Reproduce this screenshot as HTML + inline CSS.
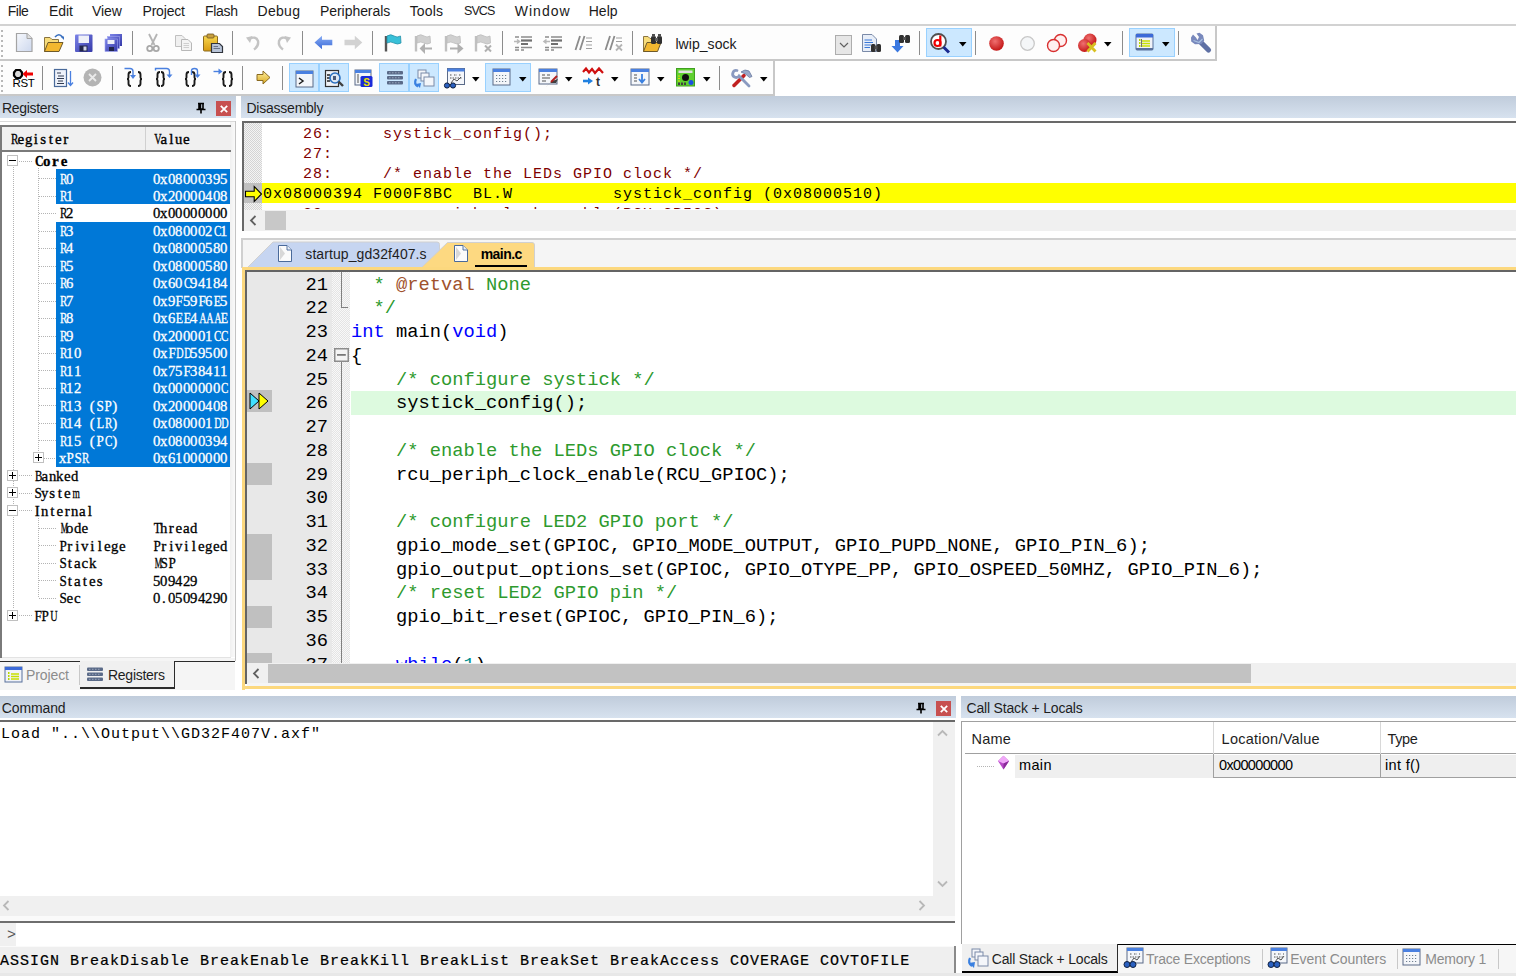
<!DOCTYPE html><html><head><meta charset="utf-8"><style>
*{box-sizing:border-box}
html,body{margin:0;padding:0;width:1516px;height:976px;overflow:hidden;background:#fff;position:relative}
div,span{position:absolute}
.t{white-space:pre;font-family:"Liberation Sans",sans-serif;font-size:13px;line-height:13px;color:#000}
.m{white-space:pre;font-family:"Liberation Mono",monospace}
.title{height:22px;background:linear-gradient(#c1ccda,#d6e1ee)}
svg{position:absolute;overflow:visible}
</style></head><body>
<span class="t" style="left:7.80px;top:4.15px;font-size:14px;line-height:14px;letter-spacing:-0.508px;color:#1a1a1a;">File</span>
<span class="t" style="left:49.00px;top:4.15px;font-size:14px;line-height:14px;letter-spacing:-0.108px;color:#1a1a1a;">Edit</span>
<span class="t" style="left:92.00px;top:4.15px;font-size:14px;line-height:14px;letter-spacing:-0.083px;color:#1a1a1a;">View</span>
<span class="t" style="left:142.50px;top:4.15px;font-size:14px;line-height:14px;letter-spacing:-0.188px;color:#1a1a1a;">Project</span>
<span class="t" style="left:205.00px;top:4.15px;font-size:14px;line-height:14px;letter-spacing:-0.312px;color:#1a1a1a;">Flash</span>
<span class="t" style="left:257.50px;top:4.15px;font-size:14px;line-height:14px;letter-spacing:0.312px;color:#1a1a1a;">Debug</span>
<span class="t" style="left:320.00px;top:4.15px;font-size:14px;line-height:14px;letter-spacing:-0.057px;color:#1a1a1a;">Peripherals</span>
<span class="t" style="left:409.70px;top:4.15px;font-size:14px;line-height:14px;letter-spacing:0.138px;color:#1a1a1a;">Tools</span>
<span class="t" style="left:464.00px;top:5.42px;font-size:12.5px;line-height:12.5px;letter-spacing:-0.933px;color:#1a1a1a;">SVCS</span>
<span class="t" style="left:514.80px;top:4.15px;font-size:14px;line-height:14px;letter-spacing:1.000px;color:#1a1a1a;">Window</span>
<span class="t" style="left:588.70px;top:4.15px;font-size:14px;line-height:14px;letter-spacing:0.050px;color:#1a1a1a;">Help</span>
<div style="left:0px;top:24px;width:1516px;height:2px;background:#d2d2d2"></div>
<div style="left:0px;top:26px;width:1216px;height:34px;background:#fdfdfd"></div>
<div style="left:1215px;top:26px;width:2px;height:35px;background:#c8c8c8"></div>
<div style="left:0px;top:59px;width:1217px;height:2px;background:#c8c8c8"></div>
<div style="left:0px;top:61px;width:773px;height:34px;background:#fdfdfd"></div>
<div style="left:773px;top:61px;width:2px;height:35px;background:#c8c8c8"></div>
<div style="left:0px;top:94px;width:775px;height:2px;background:#c8c8c8"></div>
<div style="left:1px;top:30px;width:2px;height:2px;background:#b8b8b8"></div>
<div style="left:1px;top:35px;width:2px;height:2px;background:#b8b8b8"></div>
<div style="left:1px;top:40px;width:2px;height:2px;background:#b8b8b8"></div>
<div style="left:1px;top:45px;width:2px;height:2px;background:#b8b8b8"></div>
<div style="left:1px;top:50px;width:2px;height:2px;background:#b8b8b8"></div>
<div style="left:1px;top:55px;width:2px;height:2px;background:#b8b8b8"></div>
<div style="left:1px;top:65px;width:2px;height:2px;background:#b8b8b8"></div>
<div style="left:1px;top:70px;width:2px;height:2px;background:#b8b8b8"></div>
<div style="left:1px;top:75px;width:2px;height:2px;background:#b8b8b8"></div>
<div style="left:1px;top:80px;width:2px;height:2px;background:#b8b8b8"></div>
<div style="left:1px;top:85px;width:2px;height:2px;background:#b8b8b8"></div>
<div style="left:1px;top:90px;width:2px;height:2px;background:#b8b8b8"></div>
<div style="left:131.6px;top:31px;width:1px;height:24px;background:#8c8c8c"></div>
<div style="left:231.6px;top:31px;width:1px;height:24px;background:#8c8c8c"></div>
<div style="left:301.8px;top:31px;width:1px;height:24px;background:#8c8c8c"></div>
<div style="left:371.7px;top:31px;width:1px;height:24px;background:#8c8c8c"></div>
<div style="left:501.8px;top:31px;width:1px;height:24px;background:#8c8c8c"></div>
<div style="left:632px;top:31px;width:1px;height:24px;background:#8c8c8c"></div>
<div style="left:919px;top:31px;width:1px;height:24px;background:#8c8c8c"></div>
<div style="left:975px;top:31px;width:1px;height:24px;background:#8c8c8c"></div>
<div style="left:1122px;top:31px;width:1px;height:24px;background:#8c8c8c"></div>
<div style="left:1178px;top:31px;width:1px;height:24px;background:#8c8c8c"></div>
<div style="left:41.6px;top:66px;width:1px;height:24px;background:#8c8c8c"></div>
<div style="left:111.6px;top:66px;width:1px;height:24px;background:#8c8c8c"></div>
<div style="left:241.8px;top:66px;width:1px;height:24px;background:#8c8c8c"></div>
<div style="left:281.7px;top:66px;width:1px;height:24px;background:#8c8c8c"></div>
<div style="left:719px;top:66px;width:1px;height:24px;background:#8c8c8c"></div>
<div style="left:926px;top:28px;width:46px;height:29px;background:#cce8ff;border:1px solid #99d1ff"></div>
<div style="left:1129px;top:28px;width:46px;height:29px;background:#cce8ff;border:1px solid #99d1ff"></div>
<div style="left:288.5px;top:63px;width:30.0px;height:28.5px;background:#cce8ff;border:1px solid #99d1ff"></div>
<div style="left:318.5px;top:63px;width:30.0px;height:28.5px;background:#cce8ff;border:1px solid #99d1ff"></div>
<div style="left:378.5px;top:63px;width:30.0px;height:28.5px;background:#cce8ff;border:1px solid #99d1ff"></div>
<div style="left:408.5px;top:63px;width:30.0px;height:28.5px;background:#cce8ff;border:1px solid #99d1ff"></div>
<div style="left:484.7px;top:63px;width:45.900000000000034px;height:28.5px;background:#cce8ff;border:1px solid #99d1ff"></div>
<svg style="left:15px;top:32px" width="19" height="21" viewBox="0 0 19 21"><defs><linearGradient id="gnew" x1="0" y1="0" x2="1" y2="1"><stop offset="0" stop-color="#f6f8fc"/><stop offset="1" stop-color="#cdd8ee"/></linearGradient></defs><path d="M1.5 1.5H12L17 6.5V19.5H1.5Z" fill="url(#gnew)" stroke="#a4a4a4" stroke-width="1.2"/><path d="M12 1.5V6.5H17" fill="#e0e0e0" stroke="#a4a4a4" stroke-width="1"/></svg>
<svg style="left:43px;top:33px" width="22" height="20" viewBox="0 0 22 20"><path d="M1.5 4.5H7L9 6.5H15.5V18.5H1.5Z" fill="#f7dc7a" stroke="#8a7440" stroke-width="1"/><path d="M1.5 18.5L5 9.5H20L16 18.5Z" fill="#f2b830" stroke="#6e5a2a" stroke-width="1"/><path d="M12 4 Q16 -0.5 19.5 4" fill="none" stroke="#3a70c0" stroke-width="1.6"/><path d="M17.5 3.5H21V7Z" fill="#3a70c0"/></svg>
<svg style="left:74px;top:33px" width="20" height="20" viewBox="0 0 20 20"><defs><linearGradient id="gsv" x1="0" y1="0" x2="1" y2="1"><stop offset="0" stop-color="#7c84e8"/><stop offset="1" stop-color="#3438a8"/></linearGradient></defs><rect x="1" y="1.5" width="17.5" height="17.5" rx="1" fill="url(#gsv)"/><rect x="4.5" y="2.5" width="10.5" height="7.5" fill="#eef0f8"/><rect x="5.5" y="12.5" width="8" height="6" fill="#22264a"/><rect x="9.5" y="13.5" width="3" height="4" fill="#d0d4e8"/></svg>
<svg style="left:104px;top:33px" width="20" height="20" viewBox="0 0 20 20"><defs><linearGradient id="gsa" x1="0" y1="0" x2="1" y2="1"><stop offset="0" stop-color="#7c84e8"/><stop offset="1" stop-color="#3438a8"/></linearGradient></defs><rect x="6" y="1" width="12" height="12" fill="url(#gsa)"/><rect x="3.5" y="3.5" width="12" height="12" fill="url(#gsa)" stroke="#9ea4ee" stroke-width=".6"/><rect x="1" y="6" width="12.5" height="12.5" fill="url(#gsa)" stroke="#9ea4ee" stroke-width=".6"/><rect x="3.5" y="7" width="7" height="4" fill="#eef0f8"/><rect x="5" y="14" width="5" height="4" fill="#22264a"/></svg>
<svg style="left:146px;top:33px" width="14" height="20" viewBox="0 0 14 20"><path d="M3 1L8.5 12M11 1L5.5 12" stroke="#b4b4b4" stroke-width="1.8" fill="none"/><circle cx="3.8" cy="15.5" r="2.6" fill="none" stroke="#a8a8a8" stroke-width="1.8"/><circle cx="10.2" cy="15.5" r="2.6" fill="none" stroke="#a8a8a8" stroke-width="1.8"/></svg>
<svg style="left:174px;top:34px" width="20" height="18" viewBox="0 0 20 18"><path d="M1.5 1.5H8L11 4.5V12.5H1.5Z" fill="#f0f0f0" stroke="#c0c0c0"/><path d="M7.5 5.5H14L17.5 9V16.5H7.5Z" fill="#f4f4f4" stroke="#b8b8b8"/><path d="M9.5 9.5H15M9.5 11.5H15M9.5 13.5H15" stroke="#cfcfcf"/></svg>
<svg style="left:202px;top:33px" width="22" height="20" viewBox="0 0 22 20"><defs><linearGradient id="gps" x1="0" y1="0" x2="0" y2="1"><stop offset="0" stop-color="#f8d850"/><stop offset="1" stop-color="#d89a10"/></linearGradient></defs><rect x="1.5" y="3" width="14" height="15" rx="1" fill="url(#gps)" stroke="#8a6a20"/><rect x="5" y="1" width="7" height="4" rx="1" fill="#c8a040" stroke="#6e5420" stroke-width=".8"/><path d="M9.5 10.5H17.5L20.5 13.5V19.5H9.5Z" fill="#b8c4d8" stroke="#30343c" stroke-width="1.2"/><path d="M11.5 13.5H16M11.5 15.5H18" stroke="#6a7488"/></svg>
<svg style="left:245px;top:34px" width="17" height="17" viewBox="0 0 17 17"><path d="M4 5 Q11 1.5 13 7 Q14 12 9 15.5" fill="none" stroke="#c4c4c4" stroke-width="2.4"/><path d="M1 3.5L7.5 2L5 9Z" fill="#c4c4c4"/></svg>
<svg style="left:275px;top:34px" width="17" height="17" viewBox="0 0 17 17"><path d="M13 5 Q6 1.5 4 7 Q3 12 8 15.5" fill="none" stroke="#c4c4c4" stroke-width="2.4"/><path d="M16 3.5L9.5 2L12 9Z" fill="#c4c4c4"/></svg>
<svg style="left:314px;top:35px" width="19" height="15" viewBox="0 0 19 15"><defs><linearGradient id="gbk" x1="0" y1="0" x2="0" y2="1"><stop offset="0" stop-color="#8aaef4"/><stop offset="1" stop-color="#3a6ad8"/></linearGradient></defs><path d="M0.5 7.5L8 0.7V4.8H18.3V10.2H8V14.3Z" fill="url(#gbk)"/></svg>
<svg style="left:344px;top:35px" width="19" height="15" viewBox="0 0 19 15"><path d="M18.3 7.5L10.8 0.7V4.8H0.5V10.2H10.8V14.3Z" fill="#d2d2d2"/></svg>
<svg style="left:383px;top:33px" width="20" height="20" viewBox="0 0 20 20"><path d="M3 3V18.5" stroke="#555" stroke-width="2.4"/><path d="M4 3 Q8 0.5 11 3 Q14 5 17.5 3 L18 10 Q14.5 12 11 10 Q8 8 4 10Z" fill="#38c0d8" stroke="#2490a8" stroke-width=".8"/></svg>
<svg style="left:413px;top:33px" width="21" height="20" viewBox="0 0 21 20"><path d="M3 3V18.5" stroke="#c0c0c0" stroke-width="2.4"/><path d="M4 3 Q8 0.5 11 3 Q14 5 17 3 L17.5 10 Q14 12 11 10 Q8 8 4 10Z" fill="#d0d0d0" stroke="#bcbcbc" stroke-width=".8"/><path d="M8 15.5H19M8 15.5L11 12.5V18.5Z" stroke="#b0b0b0" stroke-width="2" fill="#b0b0b0"/></svg>
<svg style="left:443px;top:33px" width="21" height="20" viewBox="0 0 21 20"><path d="M3 3V18.5" stroke="#c0c0c0" stroke-width="2.4"/><path d="M4 3 Q8 0.5 11 3 Q14 5 17 3 L17.5 10 Q14 12 11 10 Q8 8 4 10Z" fill="#d0d0d0" stroke="#bcbcbc" stroke-width=".8"/><path d="M7 15.5H17M19 15.5L15.5 12.5V18.5Z" stroke="#b0b0b0" stroke-width="2" fill="#b0b0b0"/></svg>
<svg style="left:473px;top:33px" width="21" height="20" viewBox="0 0 21 20"><path d="M3 3V18.5" stroke="#c0c0c0" stroke-width="2.4"/><path d="M4 3 Q8 0.5 11 3 Q14 5 17 3 L17.5 10 Q14 12 11 10 Q8 8 4 10Z" fill="#d0d0d0" stroke="#bcbcbc" stroke-width=".8"/><path d="M12 12.5L18 18.5M18 12.5L12 18.5" stroke="#b0b0b0" stroke-width="2"/></svg>
<svg style="left:513px;top:33px" width="21" height="20" viewBox="0 0 21 20"><path d="M8 4H19M8 7.5H19M8 11H15M8 14.5H19M8 17H11" stroke="#8c8c8c" stroke-width="1.4"/><path d="M2 4H6M2 14.5H6M2 17H6" stroke="#8c8c8c" stroke-width="1.4"/><path d="M8 7.5H19M8 11H15" stroke="#707070" stroke-width="2"/><path d="M1 8.5H6M4 6.5L6.5 8.5L4 10.5" stroke="#b8b8b8" stroke-width="1.6" fill="none"/></svg>
<svg style="left:543px;top:33px" width="21" height="20" viewBox="0 0 21 20"><path d="M8 4H19M8 7.5H19M8 11H15M8 14.5H19M8 17H11" stroke="#8c8c8c" stroke-width="1.4"/><path d="M2 4H6M2 14.5H6M2 17H6" stroke="#8c8c8c" stroke-width="1.4"/><path d="M8 7.5H19M8 11H15" stroke="#707070" stroke-width="2"/><path d="M1.5 8.5H7M3.5 6.5L1 8.5L3.5 10.5" stroke="#b8b8b8" stroke-width="1.6" fill="none"/></svg>
<svg style="left:574px;top:35px" width="20" height="17" viewBox="0 0 20 17"><path d="M6 1L1.5 15M10.5 1L6 15" stroke="#8c8c8c" stroke-width="1.8"/><path d="M12 3H18M12 6.5H18M12 10H18M12 13.5H18" stroke="#a0a0a0" stroke-width="1.2"/></svg>
<svg style="left:604px;top:35px" width="20" height="17" viewBox="0 0 20 17"><path d="M6 1L1.5 15M10.5 1L6 15" stroke="#8c8c8c" stroke-width="1.8"/><path d="M12 3H18M12 6.5H18" stroke="#a0a0a0" stroke-width="1.2"/><path d="M12 9.5L18 15.5M18 9.5L12 15.5" stroke="#b4b4b4" stroke-width="1.8"/></svg>
<svg style="left:642px;top:33px" width="24" height="20" viewBox="0 0 24 20"><path d="M1.5 3.5H6L8 5.5H14V18.5H1.5Z" fill="#f7dc7a" stroke="#8a7440"/><path d="M1.5 18.5L5 9.5H19L15.5 18.5Z" fill="#f2b830" stroke="#6e5a2a"/><rect x="9" y="3" width="5" height="8" rx="1.5" fill="#303030"/><rect x="15" y="3" width="5" height="8" rx="1.5" fill="#303030"/><rect x="13" y="5" width="3" height="3" fill="#606060"/><rect x="10" y="1" width="3" height="3" fill="#505050"/><rect x="16" y="1" width="3" height="3" fill="#505050"/></svg>
<svg style="left:861px;top:33px" width="22" height="20" viewBox="0 0 22 20"><path d="M1.5 1.5H11L15.5 6V18.5H1.5Z" fill="#e8eef8" stroke="#7a8aa8"/><path d="M3.5 7H11M3.5 9.5H12M3.5 12H10M3.5 14.5H9" stroke="#3a78d8" stroke-width="1.2"/><rect x="10" y="11" width="4.5" height="8" rx="1.5" fill="#303030"/><rect x="15.5" y="11" width="4.5" height="8" rx="1.5" fill="#303030"/><rect x="13.5" y="13" width="3" height="3" fill="#505050"/></svg>
<svg style="left:890px;top:33px" width="22" height="20" viewBox="0 0 22 20"><path d="M5 7V13H1.5L7.5 19.5L13.5 13H10V7Z" fill="#3a78e0"/><rect x="9" y="2" width="5" height="8" rx="1.5" fill="#303030"/><rect x="15" y="2" width="5" height="8" rx="1.5" fill="#303030"/><rect x="13" y="4" width="3" height="3" fill="#505050"/></svg>
<svg style="left:929px;top:32px" width="25" height="23" viewBox="0 0 25 23"><circle cx="9.5" cy="9.5" r="7.5" fill="#fff" stroke="#505050" stroke-width="1.8"/><path d="M14.5 15L20 20.5" stroke="#1a2a90" stroke-width="3"/><circle cx="8.5" cy="11" r="3" fill="none" stroke="#f00000" stroke-width="2.2"/><path d="M11.3 3.5V14.5" stroke="#f00000" stroke-width="2.2"/></svg>
<svg style="left:988px;top:35px" width="18" height="17" viewBox="0 0 18 17"><defs><radialGradient id="gbp" cx=".4" cy=".35" r=".7"><stop offset="0" stop-color="#f07070"/><stop offset="1" stop-color="#c01010"/></radialGradient></defs><circle cx="8.5" cy="8.5" r="7.3" fill="url(#gbp)"/></svg>
<svg style="left:1019px;top:35px" width="18" height="17" viewBox="0 0 18 17"><circle cx="8.5" cy="8.5" r="6.8" fill="#f4f6f8" stroke="#c8c8c8" stroke-width="1.3"/></svg>
<svg style="left:1046px;top:33px" width="23" height="20" viewBox="0 0 23 20"><circle cx="14.5" cy="7.5" r="6" fill="#fff0f0" stroke="#d83030" stroke-width="1.4"/><circle cx="7.5" cy="12.5" r="6" fill="#fff0f0" stroke="#d83030" stroke-width="1.4"/></svg>
<svg style="left:1077px;top:33px" width="23" height="20" viewBox="0 0 23 20"><circle cx="13" cy="7" r="6.5" fill="url(#gbp)"/><circle cx="7.5" cy="12.5" r="6.5" fill="url(#gbp)"/><path d="M10.5 10L18.5 18.5M18.5 10L10.5 18.5" stroke="#d8c020" stroke-width="2.8"/></svg>
<svg style="left:1135px;top:33px" width="20" height="19" viewBox="0 0 20 19"><rect x="1" y="1" width="17" height="16" rx="1" fill="#f0f2f8" stroke="#58709c"/><rect x="1" y="1" width="17" height="3.5" fill="#3c6ad8"/><rect x="1" y="15" width="17" height="2" fill="#58709c"/><path d="M4 7H5.5M4 10H5.5M4 13H5.5" stroke="#b8d800" stroke-width="2"/><path d="M7 8H15M7 10.5H15M7 13H15" stroke="#c8e000" stroke-width="1.5"/><path d="M6.5 6V14" stroke="#707070"/></svg>
<svg style="left:1190px;top:32px" width="22" height="22" viewBox="0 0 22 22"><path d="M11 10.5L18.5 18" stroke="#5e70a4" stroke-width="5.2" stroke-linecap="round"/><path d="M1 5.5L3 2.5L6 5.5L7.5 8L9 5L6.5 1.5L9.5 0.8L13 3.2L14.2 8.5L11.5 12L5 12.2L1.2 9.5Z" fill="#7888bc"/><path d="M3.5 8.5L9 10.5L12.5 7" fill="none" stroke="#a8c0e0" stroke-width="1.2"/></svg>
<svg style="left:12px;top:68px" width="23" height="20" viewBox="0 0 23 20"><path d="M4 2H8L10 4.5V7.5L8 10H4L2 7.5V4.5Z" fill="#d8d8d8" stroke="#000" stroke-width="2.2"/><path d="M10.5 6L15 2V4.5H21V7.5H15V10Z" fill="#f00000"/><text x="11.5" y="19.3" font-family="Liberation Sans" font-size="11.5" text-anchor="middle" fill="#000" letter-spacing="-.4">RST</text></svg>
<svg style="left:53px;top:68px" width="22" height="20" viewBox="0 0 22 20"><rect x="1.5" y="1.5" width="12" height="17" fill="#eef2fa" stroke="#4a6a9a" stroke-width="1.2"/><path d="M4 5H8M5 8H11M4 10.5H11M5 13H10M4 15.5H11" stroke="#303a50" stroke-width="1"/><path d="M17.5 3V17M15 14.5L17.5 17.5L20 14.5" stroke="#4a80e0" stroke-width="1.3" fill="none"/></svg>
<svg style="left:83px;top:68px" width="20" height="20" viewBox="0 0 20 20"><circle cx="9.5" cy="9.5" r="9" fill="#b4b4b4"/><path d="M6 6L13 13M13 6L6 13" stroke="#eaeaea" stroke-width="1.8"/></svg>
<svg style="left:123px;top:66px" width="22" height="22" viewBox="0 0 22 22"><path d="M8 6 Q5.5 6 5.5 8.5 V11.5 Q5.5 13 4 13 Q5.5 13 5.5 14.5 V17.5 Q5.5 20 8 20" fill="none" stroke="#1a1a1a" stroke-width="1.9"/><path d="M15 6 Q17.5 6 17.5 8.5 V11.5 Q17.5 13 19 13 Q17.5 13 17.5 14.5 V17.5 Q17.5 20 15 20" fill="none" stroke="#1a1a1a" stroke-width="1.9"/><path d="M1.5 2.5H7 Q10 2.5 10 5.5V10" fill="none" stroke="#4a80e0" stroke-width="1.4"/><path d="M7 9H13L10 13Z" fill="#4a80e0"/></svg>
<svg style="left:153px;top:66px" width="22" height="22" viewBox="0 0 22 22"><path d="M7 6 Q4.5 6 4.5 8.5 V11.5 Q4.5 13 3 13 Q4.5 13 4.5 14.5 V17.5 Q4.5 20 7 20" fill="none" stroke="#1a1a1a" stroke-width="1.9"/><path d="M8 6 Q10.5 6 10.5 8.5 V11.5 Q10.5 13 12 13 Q10.5 13 10.5 14.5 V17.5 Q10.5 20 8 20" fill="none" stroke="#1a1a1a" stroke-width="1.9"/><path d="M2.5 4.5V2.5H13.5 Q16.5 2.5 16.5 5.5V9" fill="none" stroke="#4a80e0" stroke-width="1.4"/><path d="M13.5 8.5H19.5L16.5 12Z" fill="#4a80e0"/></svg>
<svg style="left:183px;top:66px" width="22" height="22" viewBox="0 0 22 22"><path d="M6 6 Q3.5 6 3.5 8.5 V11.5 Q3.5 13 2 13 Q3.5 13 3.5 14.5 V17.5 Q3.5 20 6 20" fill="none" stroke="#1a1a1a" stroke-width="1.9"/><path d="M9 6 Q11.5 6 11.5 8.5 V11.5 Q11.5 13 13 13 Q11.5 13 11.5 14.5 V17.5 Q11.5 20 9 20" fill="none" stroke="#1a1a1a" stroke-width="1.9"/><path d="M8.5 9V5 Q8.5 2.5 11.5 2.5 Q14.5 2.5 14.5 5V9" fill="none" stroke="#4a80e0" stroke-width="1.4"/><path d="M11.5 8.5H17.5L14.5 12Z" fill="#4a80e0"/></svg>
<svg style="left:212px;top:66px" width="24" height="22" viewBox="0 0 24 22"><path d="M14 6 Q11.5 6 11.5 8.5 V11.5 Q11.5 13 10 13 Q11.5 13 11.5 14.5 V17.5 Q11.5 20 14 20" fill="none" stroke="#1a1a1a" stroke-width="1.9"/><path d="M17 6 Q19.5 6 19.5 8.5 V11.5 Q19.5 13 21 13 Q19.5 13 19.5 14.5 V17.5 Q19.5 20 17 20" fill="none" stroke="#1a1a1a" stroke-width="1.9"/><path d="M1.5 5.5H7.5" stroke="#4a80e0" stroke-width="1.4"/><path d="M6.5 2.5L10.5 5.5L6.5 8.5Z" fill="#4a80e0"/></svg>
<svg style="left:256px;top:70px" width="16" height="15" viewBox="0 0 16 15"><defs><linearGradient id="gya" x1="0" y1="0" x2="0" y2="1"><stop offset="0" stop-color="#fff0a0"/><stop offset="1" stop-color="#d8a820"/></linearGradient></defs><path d="M1 4.5H7V1L14 7.5L7 14V10.5H1Z" fill="url(#gya)" stroke="#8a6a20" stroke-width="1"/></svg>
<svg style="left:295px;top:70px" width="20" height="19" viewBox="0 0 20 19"><rect x="1" y="1" width="17" height="16" fill="#f4f6fa" stroke="#5a6a88" stroke-width="1"/><rect x="1" y="1" width="17" height="3" fill="#4a80e0"/><path d="M4 8L8 11L4 14" fill="none" stroke="#202020" stroke-width="1.5"/></svg>
<svg style="left:324px;top:69px" width="23" height="20" viewBox="0 0 23 20"><rect x="1.5" y="1.5" width="13" height="16" fill="#f0f2f6" stroke="#303030" stroke-width="1.2"/><path d="M3 6H6M3 9H6M3 12H6" stroke="#202020" stroke-width="1.4"/><circle cx="11" cy="9" r="5" fill="#dde8f4" stroke="#2a70c0" stroke-width="1.6"/><path d="M14.5 12.5L19 17" stroke="#404040" stroke-width="2.4"/><rect x="9" y="7" width="3" height="4" fill="#4a5a78"/></svg>
<svg style="left:354px;top:69px" width="19" height="18" viewBox="0 0 19 18"><rect x="1" y="1" width="16" height="15" fill="#f4f6fa" stroke="#5a6a88" stroke-width="1"/><rect x="1" y="1" width="16" height="3" fill="#4a80e0"/><path d="M4 5V14" stroke="#8a8a8a" stroke-width="1.5"/><rect x="6.5" y="7" width="12" height="11" rx="1.5" fill="#1a2ad8"/><text x="12.5" y="16.5" font-family="Liberation Sans" font-weight="bold" font-size="10" text-anchor="middle" fill="#f0e000">S</text></svg>
<svg style="left:386px;top:70px" width="18" height="16" viewBox="0 0 18 16"><rect x="1" y="1" width="16" height="3.6" rx="1" fill="#5a6a88"/><rect x="1" y="6" width="16" height="3.6" rx="1" fill="#5a6a88"/><rect x="1" y="11" width="16" height="3.6" rx="1" fill="#5a6a88"/><path d="M3 2.8H15M3 7.8H15M3 12.8H15" stroke="#a8b4c8" stroke-width=".8" stroke-dasharray="1.5 1.5"/></svg>
<svg style="left:413px;top:69px" width="23" height="20" viewBox="0 0 23 20"><rect x="5" y="1" width="8" height="8" fill="#f4f6fa" stroke="#7a8aa8"/><rect x="8" y="4" width="8" height="8" fill="#f4f6fa" stroke="#7a8aa8"/><rect x="11" y="8" width="10" height="9" fill="#f4f6fa" stroke="#7a8aa8"/><path d="M3 10 Q0.5 15 5 17.5" fill="none" stroke="#3a80e0" stroke-width="2.2"/><path d="M3 15L7 19L8 14Z" fill="#3a80e0"/></svg>
<svg style="left:443px;top:67px" width="24" height="22" viewBox="0 0 24 22"><rect x="4.5" y="1.5" width="17" height="16" fill="#f4f6fa" stroke="#5a6a88"/><rect x="4.5" y="1.5" width="17" height="3" fill="#4a80e0"/><path d="M7 8H9M11 8H14M16 8H18M7 11H19" stroke="#505050" stroke-dasharray="1.5 1"/><path d="M8 16L11 12L14 14L18 10" fill="none" stroke="#505050"/><circle cx="4" cy="18.5" r="2.6" fill="#2a60c0" stroke="#102040"/><circle cx="10" cy="18.5" r="2.6" fill="#2a60c0" stroke="#102040"/><path d="M6.5 18H7.5" stroke="#102040"/></svg>
<svg style="left:492px;top:68px" width="20" height="19" viewBox="0 0 20 19"><rect x="1" y="1" width="17" height="16" fill="#f4f6fa" stroke="#5a6a88" stroke-width="1"/><rect x="1" y="1" width="17" height="3" fill="#4a80e0"/><path d="M4 7.5H16M4 10.5H16M4 13.5H16" stroke="#708090" stroke-dasharray="1.2 1.8" stroke-width="1.2"/></svg>
<svg style="left:538px;top:68px" width="21" height="18" viewBox="0 0 21 18"><rect x="1" y="1" width="18" height="15" fill="#f4f6fa" stroke="#5a6a88" stroke-width="1"/><rect x="1" y="1" width="18" height="3" fill="#4a80e0"/><path d="M4 7H7M9 7H12M4 10H12M4 13H8" stroke="#505050" stroke-width="1.2"/><path d="M8 19L12 15L18 15L20 11L14 13Z" fill="#404040"/><path d="M13 14L19 8" stroke="#b02020" stroke-width="2"/></svg>
<svg style="left:582px;top:67px" width="23" height="21" viewBox="0 0 23 21"><path d="M1 5L4 1.5L7 5.5L10 2L13 6L17 1.5L21 6" fill="none" stroke="#d01010" stroke-width="2.2"/><path d="M1 14H7" stroke="#2080e0" stroke-width="2.6"/><path d="M6 10.5L11 14L6 17.5Z" fill="#2080e0"/><text x="16" y="19" font-family="Liberation Sans" font-weight="bold" font-size="12" text-anchor="middle" fill="#303030">t</text></svg>
<svg style="left:630px;top:68px" width="21" height="19" viewBox="0 0 21 19"><rect x="1" y="1" width="18" height="16" fill="#f4f6fa" stroke="#5a6a88" stroke-width="1"/><rect x="1" y="1" width="18" height="3" fill="#4a80e0"/><path d="M4 7H7M4 10H7M4 13H7" stroke="#505050" stroke-width="1.2"/><path d="M12 6V14M9 11L12 14.5L15 11" stroke="#3a80e0" stroke-width="1.8" fill="none"/></svg>
<svg style="left:676px;top:68px" width="20" height="19" viewBox="0 0 20 19"><rect x="0.5" y="0.5" width="18" height="17.5" fill="#60d030" stroke="#40a020"/><rect x="2.5" y="2.5" width="14" height="2.5" fill="#e0e0e0"/><circle cx="9.5" cy="9.5" r="3.5" fill="#101010"/><path d="M3 14.5V17M6 14.5V17M9 14.5V17" stroke="#404040" stroke-width="2"/><path d="M2 8H4M2 10.5H4M2 13H4" stroke="#e0e000" stroke-width="1.2"/><circle cx="15" cy="14.5" r="2.5" fill="#1a50e0"/></svg>
<svg style="left:731px;top:68px" width="23" height="20" viewBox="0 0 23 20"><path d="M3 17.5L13 7.5" stroke="#c02020" stroke-width="3.5" stroke-linecap="round"/><path d="M10 4Q14 0.5 18 3L21 8.5L18.5 9.5L14.5 6Z" fill="#98a8c8" stroke="#6a7aa0" stroke-width=".8"/><path d="M6 2.5A3.5 3.5 0 1 0 8 8L18 18" fill="none" stroke="#8a9ac0" stroke-width="2.8" stroke-linecap="round"/></svg>
<span class="t" style="left:675.40px;top:36.65px;font-size:14px;line-height:14px;letter-spacing:0.066px;color:#1a1a1a;">lwip_sock</span>
<div style="left:835px;top:35px;width:17px;height:20px;background:#e6e6e6;border:1px solid #adadad"></div>
<svg style="left:838px;top:40px" width="12" height="10"><path d="M2 3 L6 7 L10 3" fill="none" stroke="#606060" stroke-width="1.2"/></svg>
<svg style="left:959.3px;top:41.8px" width="9" height="6"><path d="M0 0 H7.5 L3.75 4.5Z" fill="#000"/></svg>
<svg style="left:1104.3px;top:41.8px" width="9" height="6"><path d="M0 0 H7.5 L3.75 4.5Z" fill="#000"/></svg>
<svg style="left:1162px;top:41.8px" width="9" height="6"><path d="M0 0 H7.5 L3.75 4.5Z" fill="#000"/></svg>
<svg style="left:472px;top:76.8px" width="9" height="6"><path d="M0 0 H7.5 L3.75 4.5Z" fill="#000"/></svg>
<svg style="left:518.5px;top:76.8px" width="9" height="6"><path d="M0 0 H7.5 L3.75 4.5Z" fill="#000"/></svg>
<svg style="left:564.8px;top:76.8px" width="9" height="6"><path d="M0 0 H7.5 L3.75 4.5Z" fill="#000"/></svg>
<svg style="left:611px;top:76.8px" width="9" height="6"><path d="M0 0 H7.5 L3.75 4.5Z" fill="#000"/></svg>
<svg style="left:657px;top:76.8px" width="9" height="6"><path d="M0 0 H7.5 L3.75 4.5Z" fill="#000"/></svg>
<svg style="left:703.3px;top:76.8px" width="9" height="6"><path d="M0 0 H7.5 L3.75 4.5Z" fill="#000"/></svg>
<svg style="left:759.8px;top:76.8px" width="9" height="6"><path d="M0 0 H7.5 L3.75 4.5Z" fill="#000"/></svg>
<div style="left:0px;top:96px;width:236px;height:22px;background:linear-gradient(#c0ccdb,#d7e2ef)"></div>
<svg style="left:196px;top:103px" width="10" height="11"><path d="M2 0.5H8M3 0.5V6H7V0.5M0.5 6.5H9.5M5 6.5V10.5" fill="none" stroke="#000" stroke-width="1.6"/><rect x="3" y="1" width="2.2" height="5" fill="#000"/></svg>
<div style="left:216px;top:101px;width:15px;height:15px;background:#c75050"></div>
<svg style="left:219.5px;top:104.5px" width="8" height="8"><path d="M0.8 0.8L7.2 7.2M7.2 0.8L0.8 7.2" stroke="#fff" stroke-width="1.8"/></svg>
<div style="left:241px;top:96px;width:1275px;height:22px;background:linear-gradient(#c0ccdb,#d7e2ef)"></div>
<div style="left:0px;top:696px;width:956px;height:22px;background:linear-gradient(#c0ccdb,#d7e2ef)"></div>
<svg style="left:916px;top:703px" width="10" height="11"><path d="M2 0.5H8M3 0.5V6H7V0.5M0.5 6.5H9.5M5 6.5V10.5" fill="none" stroke="#000" stroke-width="1.6"/><rect x="3" y="1" width="2.2" height="5" fill="#000"/></svg>
<div style="left:936px;top:701px;width:15px;height:15px;background:#c75050"></div>
<svg style="left:939.5px;top:704.5px" width="8" height="8"><path d="M0.8 0.8L7.2 7.2M7.2 0.8L0.8 7.2" stroke="#fff" stroke-width="1.8"/></svg>
<div style="left:961px;top:696px;width:555px;height:22px;background:linear-gradient(#c0ccdb,#d7e2ef)"></div>
<span class="t" style="left:2.00px;top:101.35px;font-size:14px;line-height:14px;letter-spacing:-0.303px;color:#1e1e1e;">Registers</span>
<span class="t" style="left:246.50px;top:101.35px;font-size:14px;line-height:14px;letter-spacing:-0.237px;color:#1e1e1e;">Disassembly</span>
<span class="t" style="left:1.70px;top:701.15px;font-size:14px;line-height:14px;letter-spacing:-0.104px;color:#1e1e1e;">Command</span>
<span class="t" style="left:966.50px;top:701.15px;font-size:14px;line-height:14px;letter-spacing:-0.178px;color:#1e1e1e;">Call Stack + Locals</span>
<div style="left:0px;top:121px;width:235px;height:1px;background:#d9d9d9"></div>
<div style="left:235px;top:121px;width:1px;height:540px;background:#c4c4c4"></div>
<div style="left:230px;top:122px;width:5px;height:535px;background:linear-gradient(90deg,#f0f0f0,#fafafa)"></div>
<div style="left:0px;top:125px;width:231px;height:2px;background:#7a7a7a"></div>
<div style="left:0px;top:125px;width:2px;height:533px;background:#7a7a7a"></div>
<div style="left:2px;top:127px;width:228px;height:23px;background:#f0f0f0"></div>
<div style="left:145px;top:127px;width:1px;height:23px;background:#d0d0d0"></div>
<div style="left:0px;top:150px;width:231px;height:2px;background:#7a7a7a"></div>
<div style="left:2px;top:152px;width:228px;height:505px;background:#fff"></div>
<div style="left:2px;top:657px;width:229px;height:1px;background:#e3e3e3"></div>
<span style="left:9.5px;top:132.2px;white-space:nowrap;font-family:'Liberation Serif',serif;font-size:15px;line-height:14px;color:#000;-webkit-text-stroke:0.3px #000;-webkit-text-stroke:0.35px #000;"><span style="position:static;display:inline-block;width:7.5px;text-align:center;transform:scaleX(0.735)">R</span><span style="position:static;display:inline-block;width:7.5px;text-align:center">e</span><span style="position:static;display:inline-block;width:7.5px;text-align:center;transform:scaleX(0.980)">g</span><span style="position:static;display:inline-block;width:7.5px;text-align:center">i</span><span style="position:static;display:inline-block;width:7.5px;text-align:center">s</span><span style="position:static;display:inline-block;width:7.5px;text-align:center">t</span><span style="position:static;display:inline-block;width:7.5px;text-align:center">e</span><span style="position:static;display:inline-block;width:7.5px;text-align:center">r</span></span>
<span style="left:152.5px;top:132.2px;white-space:nowrap;font-family:'Liberation Serif',serif;font-size:15px;line-height:14px;color:#000;-webkit-text-stroke:0.3px #000;-webkit-text-stroke:0.35px #000;"><span style="position:static;display:inline-block;width:7.5px;text-align:center;transform:scaleX(0.679)">V</span><span style="position:static;display:inline-block;width:7.5px;text-align:center">a</span><span style="position:static;display:inline-block;width:7.5px;text-align:center">l</span><span style="position:static;display:inline-block;width:7.5px;text-align:center;transform:scaleX(0.980)">u</span><span style="position:static;display:inline-block;width:7.5px;text-align:center">e</span></span>
<div style="left:56px;top:169.48px;width:174px;height:34.96px;background:#0078d7"></div>
<div style="left:56px;top:221.92000000000002px;width:174px;height:244.72px;background:#0078d7"></div>
<div style="left:13px;top:166.74px;width:1px;height:442.48px;background:repeating-linear-gradient(#b4b4b4 0 1px,transparent 1px 2px)"></div>
<div style="left:38px;top:168.48px;width:1px;height:283.4200000000001px;background:repeating-linear-gradient(#b4b4b4 0 1px,transparent 1px 2px)"></div>
<div style="left:38px;top:518.0799999999999px;width:1px;height:79.66000000000008px;background:repeating-linear-gradient(#b4b4b4 0 1px,transparent 1px 2px)"></div>
<div style="left:7px;top:155px;width:11px;height:11px;background:#fff;border:1px solid #c0c0c0"></div>
<div style="left:9px;top:160px;width:7px;height:1px;background:#000"></div>
<div style="left:19px;top:161px;width:13px;height:1px;background:repeating-linear-gradient(90deg,#b4b4b4 0 1px,transparent 1px 2px)"></div>
<span style="left:33.5px;top:154.04px;white-space:nowrap;font-family:'Liberation Serif',serif;font-size:15px;line-height:14px;color:#000;font-weight:bold;-webkit-text-stroke:0.3px #000;"><span style="position:static;display:inline-block;width:8.75px;text-align:center;transform:scaleX(0.792)">C</span><span style="position:static;display:inline-block;width:8.75px;text-align:center">o</span><span style="position:static;display:inline-block;width:8.75px;text-align:center">r</span><span style="position:static;display:inline-block;width:8.75px;text-align:center">e</span></span>
<div style="left:39px;top:178px;width:17px;height:1px;background:repeating-linear-gradient(90deg,#b4b4b4 0 1px,transparent 1px 2px)"></div>
<span style="left:58.5px;top:171.52px;white-space:nowrap;font-family:'Liberation Serif',serif;font-size:15px;line-height:14px;color:#fff;-webkit-text-stroke:0.3px #fff;"><span style="position:static;display:inline-block;width:7.5px;text-align:center;transform:scaleX(0.735)">R</span><span style="position:static;display:inline-block;width:7.5px;text-align:center;transform:scaleX(0.980)">0</span></span>
<span style="left:152.5px;top:171.52px;white-space:nowrap;font-family:'Liberation Serif',serif;font-size:15px;line-height:14px;color:#fff;-webkit-text-stroke:0.3px #fff;"><span style="position:static;display:inline-block;width:7.5px;text-align:center;transform:scaleX(0.980)">0</span><span style="position:static;display:inline-block;width:7.5px;text-align:center;transform:scaleX(0.980)">x</span><span style="position:static;display:inline-block;width:7.5px;text-align:center;transform:scaleX(0.980)">0</span><span style="position:static;display:inline-block;width:7.5px;text-align:center;transform:scaleX(0.980)">8</span><span style="position:static;display:inline-block;width:7.5px;text-align:center;transform:scaleX(0.980)">0</span><span style="position:static;display:inline-block;width:7.5px;text-align:center;transform:scaleX(0.980)">0</span><span style="position:static;display:inline-block;width:7.5px;text-align:center;transform:scaleX(0.980)">0</span><span style="position:static;display:inline-block;width:7.5px;text-align:center;transform:scaleX(0.980)">3</span><span style="position:static;display:inline-block;width:7.5px;text-align:center;transform:scaleX(0.980)">9</span><span style="position:static;display:inline-block;width:7.5px;text-align:center;transform:scaleX(0.980)">5</span></span>
<div style="left:39px;top:196px;width:17px;height:1px;background:repeating-linear-gradient(90deg,#b4b4b4 0 1px,transparent 1px 2px)"></div>
<span style="left:58.5px;top:189.0px;white-space:nowrap;font-family:'Liberation Serif',serif;font-size:15px;line-height:14px;color:#fff;-webkit-text-stroke:0.3px #fff;"><span style="position:static;display:inline-block;width:7.5px;text-align:center;transform:scaleX(0.735)">R</span><span style="position:static;display:inline-block;width:7.5px;text-align:center;transform:scaleX(0.980)">1</span></span>
<span style="left:152.5px;top:189.0px;white-space:nowrap;font-family:'Liberation Serif',serif;font-size:15px;line-height:14px;color:#fff;-webkit-text-stroke:0.3px #fff;"><span style="position:static;display:inline-block;width:7.5px;text-align:center;transform:scaleX(0.980)">0</span><span style="position:static;display:inline-block;width:7.5px;text-align:center;transform:scaleX(0.980)">x</span><span style="position:static;display:inline-block;width:7.5px;text-align:center;transform:scaleX(0.980)">2</span><span style="position:static;display:inline-block;width:7.5px;text-align:center;transform:scaleX(0.980)">0</span><span style="position:static;display:inline-block;width:7.5px;text-align:center;transform:scaleX(0.980)">0</span><span style="position:static;display:inline-block;width:7.5px;text-align:center;transform:scaleX(0.980)">0</span><span style="position:static;display:inline-block;width:7.5px;text-align:center;transform:scaleX(0.980)">0</span><span style="position:static;display:inline-block;width:7.5px;text-align:center;transform:scaleX(0.980)">4</span><span style="position:static;display:inline-block;width:7.5px;text-align:center;transform:scaleX(0.980)">0</span><span style="position:static;display:inline-block;width:7.5px;text-align:center;transform:scaleX(0.980)">8</span></span>
<div style="left:39px;top:213px;width:17px;height:1px;background:repeating-linear-gradient(90deg,#b4b4b4 0 1px,transparent 1px 2px)"></div>
<span style="left:58.5px;top:206.48px;white-space:nowrap;font-family:'Liberation Serif',serif;font-size:15px;line-height:14px;color:#000;-webkit-text-stroke:0.3px #000;"><span style="position:static;display:inline-block;width:7.5px;text-align:center;transform:scaleX(0.735)">R</span><span style="position:static;display:inline-block;width:7.5px;text-align:center;transform:scaleX(0.980)">2</span></span>
<span style="left:152.5px;top:206.48px;white-space:nowrap;font-family:'Liberation Serif',serif;font-size:15px;line-height:14px;color:#000;-webkit-text-stroke:0.3px #000;"><span style="position:static;display:inline-block;width:7.5px;text-align:center;transform:scaleX(0.980)">0</span><span style="position:static;display:inline-block;width:7.5px;text-align:center;transform:scaleX(0.980)">x</span><span style="position:static;display:inline-block;width:7.5px;text-align:center;transform:scaleX(0.980)">0</span><span style="position:static;display:inline-block;width:7.5px;text-align:center;transform:scaleX(0.980)">0</span><span style="position:static;display:inline-block;width:7.5px;text-align:center;transform:scaleX(0.980)">0</span><span style="position:static;display:inline-block;width:7.5px;text-align:center;transform:scaleX(0.980)">0</span><span style="position:static;display:inline-block;width:7.5px;text-align:center;transform:scaleX(0.980)">0</span><span style="position:static;display:inline-block;width:7.5px;text-align:center;transform:scaleX(0.980)">0</span><span style="position:static;display:inline-block;width:7.5px;text-align:center;transform:scaleX(0.980)">0</span><span style="position:static;display:inline-block;width:7.5px;text-align:center;transform:scaleX(0.980)">0</span></span>
<div style="left:39px;top:231px;width:17px;height:1px;background:repeating-linear-gradient(90deg,#b4b4b4 0 1px,transparent 1px 2px)"></div>
<span style="left:58.5px;top:223.96px;white-space:nowrap;font-family:'Liberation Serif',serif;font-size:15px;line-height:14px;color:#fff;-webkit-text-stroke:0.3px #fff;"><span style="position:static;display:inline-block;width:7.5px;text-align:center;transform:scaleX(0.735)">R</span><span style="position:static;display:inline-block;width:7.5px;text-align:center;transform:scaleX(0.980)">3</span></span>
<span style="left:152.5px;top:223.96px;white-space:nowrap;font-family:'Liberation Serif',serif;font-size:15px;line-height:14px;color:#fff;-webkit-text-stroke:0.3px #fff;"><span style="position:static;display:inline-block;width:7.5px;text-align:center;transform:scaleX(0.980)">0</span><span style="position:static;display:inline-block;width:7.5px;text-align:center;transform:scaleX(0.980)">x</span><span style="position:static;display:inline-block;width:7.5px;text-align:center;transform:scaleX(0.980)">0</span><span style="position:static;display:inline-block;width:7.5px;text-align:center;transform:scaleX(0.980)">8</span><span style="position:static;display:inline-block;width:7.5px;text-align:center;transform:scaleX(0.980)">0</span><span style="position:static;display:inline-block;width:7.5px;text-align:center;transform:scaleX(0.980)">0</span><span style="position:static;display:inline-block;width:7.5px;text-align:center;transform:scaleX(0.980)">0</span><span style="position:static;display:inline-block;width:7.5px;text-align:center;transform:scaleX(0.980)">2</span><span style="position:static;display:inline-block;width:7.5px;text-align:center;transform:scaleX(0.735)">C</span><span style="position:static;display:inline-block;width:7.5px;text-align:center;transform:scaleX(0.980)">1</span></span>
<div style="left:39px;top:248px;width:17px;height:1px;background:repeating-linear-gradient(90deg,#b4b4b4 0 1px,transparent 1px 2px)"></div>
<span style="left:58.5px;top:241.44px;white-space:nowrap;font-family:'Liberation Serif',serif;font-size:15px;line-height:14px;color:#fff;-webkit-text-stroke:0.3px #fff;"><span style="position:static;display:inline-block;width:7.5px;text-align:center;transform:scaleX(0.735)">R</span><span style="position:static;display:inline-block;width:7.5px;text-align:center;transform:scaleX(0.980)">4</span></span>
<span style="left:152.5px;top:241.44px;white-space:nowrap;font-family:'Liberation Serif',serif;font-size:15px;line-height:14px;color:#fff;-webkit-text-stroke:0.3px #fff;"><span style="position:static;display:inline-block;width:7.5px;text-align:center;transform:scaleX(0.980)">0</span><span style="position:static;display:inline-block;width:7.5px;text-align:center;transform:scaleX(0.980)">x</span><span style="position:static;display:inline-block;width:7.5px;text-align:center;transform:scaleX(0.980)">0</span><span style="position:static;display:inline-block;width:7.5px;text-align:center;transform:scaleX(0.980)">8</span><span style="position:static;display:inline-block;width:7.5px;text-align:center;transform:scaleX(0.980)">0</span><span style="position:static;display:inline-block;width:7.5px;text-align:center;transform:scaleX(0.980)">0</span><span style="position:static;display:inline-block;width:7.5px;text-align:center;transform:scaleX(0.980)">0</span><span style="position:static;display:inline-block;width:7.5px;text-align:center;transform:scaleX(0.980)">5</span><span style="position:static;display:inline-block;width:7.5px;text-align:center;transform:scaleX(0.980)">8</span><span style="position:static;display:inline-block;width:7.5px;text-align:center;transform:scaleX(0.980)">0</span></span>
<div style="left:39px;top:266px;width:17px;height:1px;background:repeating-linear-gradient(90deg,#b4b4b4 0 1px,transparent 1px 2px)"></div>
<span style="left:58.5px;top:258.92px;white-space:nowrap;font-family:'Liberation Serif',serif;font-size:15px;line-height:14px;color:#fff;-webkit-text-stroke:0.3px #fff;"><span style="position:static;display:inline-block;width:7.5px;text-align:center;transform:scaleX(0.735)">R</span><span style="position:static;display:inline-block;width:7.5px;text-align:center;transform:scaleX(0.980)">5</span></span>
<span style="left:152.5px;top:258.92px;white-space:nowrap;font-family:'Liberation Serif',serif;font-size:15px;line-height:14px;color:#fff;-webkit-text-stroke:0.3px #fff;"><span style="position:static;display:inline-block;width:7.5px;text-align:center;transform:scaleX(0.980)">0</span><span style="position:static;display:inline-block;width:7.5px;text-align:center;transform:scaleX(0.980)">x</span><span style="position:static;display:inline-block;width:7.5px;text-align:center;transform:scaleX(0.980)">0</span><span style="position:static;display:inline-block;width:7.5px;text-align:center;transform:scaleX(0.980)">8</span><span style="position:static;display:inline-block;width:7.5px;text-align:center;transform:scaleX(0.980)">0</span><span style="position:static;display:inline-block;width:7.5px;text-align:center;transform:scaleX(0.980)">0</span><span style="position:static;display:inline-block;width:7.5px;text-align:center;transform:scaleX(0.980)">0</span><span style="position:static;display:inline-block;width:7.5px;text-align:center;transform:scaleX(0.980)">5</span><span style="position:static;display:inline-block;width:7.5px;text-align:center;transform:scaleX(0.980)">8</span><span style="position:static;display:inline-block;width:7.5px;text-align:center;transform:scaleX(0.980)">0</span></span>
<div style="left:39px;top:283px;width:17px;height:1px;background:repeating-linear-gradient(90deg,#b4b4b4 0 1px,transparent 1px 2px)"></div>
<span style="left:58.5px;top:276.4px;white-space:nowrap;font-family:'Liberation Serif',serif;font-size:15px;line-height:14px;color:#fff;-webkit-text-stroke:0.3px #fff;"><span style="position:static;display:inline-block;width:7.5px;text-align:center;transform:scaleX(0.735)">R</span><span style="position:static;display:inline-block;width:7.5px;text-align:center;transform:scaleX(0.980)">6</span></span>
<span style="left:152.5px;top:276.4px;white-space:nowrap;font-family:'Liberation Serif',serif;font-size:15px;line-height:14px;color:#fff;-webkit-text-stroke:0.3px #fff;"><span style="position:static;display:inline-block;width:7.5px;text-align:center;transform:scaleX(0.980)">0</span><span style="position:static;display:inline-block;width:7.5px;text-align:center;transform:scaleX(0.980)">x</span><span style="position:static;display:inline-block;width:7.5px;text-align:center;transform:scaleX(0.980)">6</span><span style="position:static;display:inline-block;width:7.5px;text-align:center;transform:scaleX(0.980)">0</span><span style="position:static;display:inline-block;width:7.5px;text-align:center;transform:scaleX(0.735)">C</span><span style="position:static;display:inline-block;width:7.5px;text-align:center;transform:scaleX(0.980)">9</span><span style="position:static;display:inline-block;width:7.5px;text-align:center;transform:scaleX(0.980)">4</span><span style="position:static;display:inline-block;width:7.5px;text-align:center;transform:scaleX(0.980)">1</span><span style="position:static;display:inline-block;width:7.5px;text-align:center;transform:scaleX(0.980)">8</span><span style="position:static;display:inline-block;width:7.5px;text-align:center;transform:scaleX(0.980)">4</span></span>
<div style="left:39px;top:301px;width:17px;height:1px;background:repeating-linear-gradient(90deg,#b4b4b4 0 1px,transparent 1px 2px)"></div>
<span style="left:58.5px;top:293.88px;white-space:nowrap;font-family:'Liberation Serif',serif;font-size:15px;line-height:14px;color:#fff;-webkit-text-stroke:0.3px #fff;"><span style="position:static;display:inline-block;width:7.5px;text-align:center;transform:scaleX(0.735)">R</span><span style="position:static;display:inline-block;width:7.5px;text-align:center;transform:scaleX(0.980)">7</span></span>
<span style="left:152.5px;top:293.88px;white-space:nowrap;font-family:'Liberation Serif',serif;font-size:15px;line-height:14px;color:#fff;-webkit-text-stroke:0.3px #fff;"><span style="position:static;display:inline-block;width:7.5px;text-align:center;transform:scaleX(0.980)">0</span><span style="position:static;display:inline-block;width:7.5px;text-align:center;transform:scaleX(0.980)">x</span><span style="position:static;display:inline-block;width:7.5px;text-align:center;transform:scaleX(0.980)">9</span><span style="position:static;display:inline-block;width:7.5px;text-align:center;transform:scaleX(0.881)">F</span><span style="position:static;display:inline-block;width:7.5px;text-align:center;transform:scaleX(0.980)">5</span><span style="position:static;display:inline-block;width:7.5px;text-align:center;transform:scaleX(0.980)">9</span><span style="position:static;display:inline-block;width:7.5px;text-align:center;transform:scaleX(0.881)">F</span><span style="position:static;display:inline-block;width:7.5px;text-align:center;transform:scaleX(0.980)">6</span><span style="position:static;display:inline-block;width:7.5px;text-align:center;transform:scaleX(0.802)">E</span><span style="position:static;display:inline-block;width:7.5px;text-align:center;transform:scaleX(0.980)">5</span></span>
<div style="left:39px;top:318px;width:17px;height:1px;background:repeating-linear-gradient(90deg,#b4b4b4 0 1px,transparent 1px 2px)"></div>
<span style="left:58.5px;top:311.36px;white-space:nowrap;font-family:'Liberation Serif',serif;font-size:15px;line-height:14px;color:#fff;-webkit-text-stroke:0.3px #fff;"><span style="position:static;display:inline-block;width:7.5px;text-align:center;transform:scaleX(0.735)">R</span><span style="position:static;display:inline-block;width:7.5px;text-align:center;transform:scaleX(0.980)">8</span></span>
<span style="left:152.5px;top:311.36px;white-space:nowrap;font-family:'Liberation Serif',serif;font-size:15px;line-height:14px;color:#fff;-webkit-text-stroke:0.3px #fff;"><span style="position:static;display:inline-block;width:7.5px;text-align:center;transform:scaleX(0.980)">0</span><span style="position:static;display:inline-block;width:7.5px;text-align:center;transform:scaleX(0.980)">x</span><span style="position:static;display:inline-block;width:7.5px;text-align:center;transform:scaleX(0.980)">6</span><span style="position:static;display:inline-block;width:7.5px;text-align:center;transform:scaleX(0.802)">E</span><span style="position:static;display:inline-block;width:7.5px;text-align:center;transform:scaleX(0.802)">E</span><span style="position:static;display:inline-block;width:7.5px;text-align:center;transform:scaleX(0.980)">4</span><span style="position:static;display:inline-block;width:7.5px;text-align:center;transform:scaleX(0.679)">A</span><span style="position:static;display:inline-block;width:7.5px;text-align:center;transform:scaleX(0.679)">A</span><span style="position:static;display:inline-block;width:7.5px;text-align:center;transform:scaleX(0.679)">A</span><span style="position:static;display:inline-block;width:7.5px;text-align:center;transform:scaleX(0.802)">E</span></span>
<div style="left:39px;top:336px;width:17px;height:1px;background:repeating-linear-gradient(90deg,#b4b4b4 0 1px,transparent 1px 2px)"></div>
<span style="left:58.5px;top:328.84px;white-space:nowrap;font-family:'Liberation Serif',serif;font-size:15px;line-height:14px;color:#fff;-webkit-text-stroke:0.3px #fff;"><span style="position:static;display:inline-block;width:7.5px;text-align:center;transform:scaleX(0.735)">R</span><span style="position:static;display:inline-block;width:7.5px;text-align:center;transform:scaleX(0.980)">9</span></span>
<span style="left:152.5px;top:328.84px;white-space:nowrap;font-family:'Liberation Serif',serif;font-size:15px;line-height:14px;color:#fff;-webkit-text-stroke:0.3px #fff;"><span style="position:static;display:inline-block;width:7.5px;text-align:center;transform:scaleX(0.980)">0</span><span style="position:static;display:inline-block;width:7.5px;text-align:center;transform:scaleX(0.980)">x</span><span style="position:static;display:inline-block;width:7.5px;text-align:center;transform:scaleX(0.980)">2</span><span style="position:static;display:inline-block;width:7.5px;text-align:center;transform:scaleX(0.980)">0</span><span style="position:static;display:inline-block;width:7.5px;text-align:center;transform:scaleX(0.980)">0</span><span style="position:static;display:inline-block;width:7.5px;text-align:center;transform:scaleX(0.980)">0</span><span style="position:static;display:inline-block;width:7.5px;text-align:center;transform:scaleX(0.980)">0</span><span style="position:static;display:inline-block;width:7.5px;text-align:center;transform:scaleX(0.980)">1</span><span style="position:static;display:inline-block;width:7.5px;text-align:center;transform:scaleX(0.735)">C</span><span style="position:static;display:inline-block;width:7.5px;text-align:center;transform:scaleX(0.735)">C</span></span>
<div style="left:39px;top:353px;width:17px;height:1px;background:repeating-linear-gradient(90deg,#b4b4b4 0 1px,transparent 1px 2px)"></div>
<span style="left:58.5px;top:346.32px;white-space:nowrap;font-family:'Liberation Serif',serif;font-size:15px;line-height:14px;color:#fff;-webkit-text-stroke:0.3px #fff;"><span style="position:static;display:inline-block;width:7.5px;text-align:center;transform:scaleX(0.735)">R</span><span style="position:static;display:inline-block;width:7.5px;text-align:center;transform:scaleX(0.980)">1</span><span style="position:static;display:inline-block;width:7.5px;text-align:center;transform:scaleX(0.980)">0</span></span>
<span style="left:152.5px;top:346.32px;white-space:nowrap;font-family:'Liberation Serif',serif;font-size:15px;line-height:14px;color:#fff;-webkit-text-stroke:0.3px #fff;"><span style="position:static;display:inline-block;width:7.5px;text-align:center;transform:scaleX(0.980)">0</span><span style="position:static;display:inline-block;width:7.5px;text-align:center;transform:scaleX(0.980)">x</span><span style="position:static;display:inline-block;width:7.5px;text-align:center;transform:scaleX(0.881)">F</span><span style="position:static;display:inline-block;width:7.5px;text-align:center;transform:scaleX(0.679)">D</span><span style="position:static;display:inline-block;width:7.5px;text-align:center;transform:scaleX(0.679)">D</span><span style="position:static;display:inline-block;width:7.5px;text-align:center;transform:scaleX(0.980)">5</span><span style="position:static;display:inline-block;width:7.5px;text-align:center;transform:scaleX(0.980)">9</span><span style="position:static;display:inline-block;width:7.5px;text-align:center;transform:scaleX(0.980)">5</span><span style="position:static;display:inline-block;width:7.5px;text-align:center;transform:scaleX(0.980)">0</span><span style="position:static;display:inline-block;width:7.5px;text-align:center;transform:scaleX(0.980)">0</span></span>
<div style="left:39px;top:370px;width:17px;height:1px;background:repeating-linear-gradient(90deg,#b4b4b4 0 1px,transparent 1px 2px)"></div>
<span style="left:58.5px;top:363.8px;white-space:nowrap;font-family:'Liberation Serif',serif;font-size:15px;line-height:14px;color:#fff;-webkit-text-stroke:0.3px #fff;"><span style="position:static;display:inline-block;width:7.5px;text-align:center;transform:scaleX(0.735)">R</span><span style="position:static;display:inline-block;width:7.5px;text-align:center;transform:scaleX(0.980)">1</span><span style="position:static;display:inline-block;width:7.5px;text-align:center;transform:scaleX(0.980)">1</span></span>
<span style="left:152.5px;top:363.8px;white-space:nowrap;font-family:'Liberation Serif',serif;font-size:15px;line-height:14px;color:#fff;-webkit-text-stroke:0.3px #fff;"><span style="position:static;display:inline-block;width:7.5px;text-align:center;transform:scaleX(0.980)">0</span><span style="position:static;display:inline-block;width:7.5px;text-align:center;transform:scaleX(0.980)">x</span><span style="position:static;display:inline-block;width:7.5px;text-align:center;transform:scaleX(0.980)">7</span><span style="position:static;display:inline-block;width:7.5px;text-align:center;transform:scaleX(0.980)">5</span><span style="position:static;display:inline-block;width:7.5px;text-align:center;transform:scaleX(0.881)">F</span><span style="position:static;display:inline-block;width:7.5px;text-align:center;transform:scaleX(0.980)">3</span><span style="position:static;display:inline-block;width:7.5px;text-align:center;transform:scaleX(0.980)">8</span><span style="position:static;display:inline-block;width:7.5px;text-align:center;transform:scaleX(0.980)">4</span><span style="position:static;display:inline-block;width:7.5px;text-align:center;transform:scaleX(0.980)">1</span><span style="position:static;display:inline-block;width:7.5px;text-align:center;transform:scaleX(0.980)">1</span></span>
<div style="left:39px;top:388px;width:17px;height:1px;background:repeating-linear-gradient(90deg,#b4b4b4 0 1px,transparent 1px 2px)"></div>
<span style="left:58.5px;top:381.28px;white-space:nowrap;font-family:'Liberation Serif',serif;font-size:15px;line-height:14px;color:#fff;-webkit-text-stroke:0.3px #fff;"><span style="position:static;display:inline-block;width:7.5px;text-align:center;transform:scaleX(0.735)">R</span><span style="position:static;display:inline-block;width:7.5px;text-align:center;transform:scaleX(0.980)">1</span><span style="position:static;display:inline-block;width:7.5px;text-align:center;transform:scaleX(0.980)">2</span></span>
<span style="left:152.5px;top:381.28px;white-space:nowrap;font-family:'Liberation Serif',serif;font-size:15px;line-height:14px;color:#fff;-webkit-text-stroke:0.3px #fff;"><span style="position:static;display:inline-block;width:7.5px;text-align:center;transform:scaleX(0.980)">0</span><span style="position:static;display:inline-block;width:7.5px;text-align:center;transform:scaleX(0.980)">x</span><span style="position:static;display:inline-block;width:7.5px;text-align:center;transform:scaleX(0.980)">0</span><span style="position:static;display:inline-block;width:7.5px;text-align:center;transform:scaleX(0.980)">0</span><span style="position:static;display:inline-block;width:7.5px;text-align:center;transform:scaleX(0.980)">0</span><span style="position:static;display:inline-block;width:7.5px;text-align:center;transform:scaleX(0.980)">0</span><span style="position:static;display:inline-block;width:7.5px;text-align:center;transform:scaleX(0.980)">0</span><span style="position:static;display:inline-block;width:7.5px;text-align:center;transform:scaleX(0.980)">0</span><span style="position:static;display:inline-block;width:7.5px;text-align:center;transform:scaleX(0.980)">0</span><span style="position:static;display:inline-block;width:7.5px;text-align:center;transform:scaleX(0.735)">C</span></span>
<div style="left:39px;top:405px;width:17px;height:1px;background:repeating-linear-gradient(90deg,#b4b4b4 0 1px,transparent 1px 2px)"></div>
<span style="left:58.5px;top:398.76px;white-space:nowrap;font-family:'Liberation Serif',serif;font-size:15px;line-height:14px;color:#fff;-webkit-text-stroke:0.3px #fff;"><span style="position:static;display:inline-block;width:7.5px;text-align:center;transform:scaleX(0.735)">R</span><span style="position:static;display:inline-block;width:7.5px;text-align:center;transform:scaleX(0.980)">1</span><span style="position:static;display:inline-block;width:7.5px;text-align:center;transform:scaleX(0.980)">3</span><span style="position:static;display:inline-block;width:7.5px">&nbsp;</span><span style="position:static;display:inline-block;width:7.5px;text-align:center">(</span><span style="position:static;display:inline-block;width:7.5px;text-align:center;transform:scaleX(0.881)">S</span><span style="position:static;display:inline-block;width:7.5px;text-align:center;transform:scaleX(0.881)">P</span><span style="position:static;display:inline-block;width:7.5px;text-align:center">)</span></span>
<span style="left:152.5px;top:398.76px;white-space:nowrap;font-family:'Liberation Serif',serif;font-size:15px;line-height:14px;color:#fff;-webkit-text-stroke:0.3px #fff;"><span style="position:static;display:inline-block;width:7.5px;text-align:center;transform:scaleX(0.980)">0</span><span style="position:static;display:inline-block;width:7.5px;text-align:center;transform:scaleX(0.980)">x</span><span style="position:static;display:inline-block;width:7.5px;text-align:center;transform:scaleX(0.980)">2</span><span style="position:static;display:inline-block;width:7.5px;text-align:center;transform:scaleX(0.980)">0</span><span style="position:static;display:inline-block;width:7.5px;text-align:center;transform:scaleX(0.980)">0</span><span style="position:static;display:inline-block;width:7.5px;text-align:center;transform:scaleX(0.980)">0</span><span style="position:static;display:inline-block;width:7.5px;text-align:center;transform:scaleX(0.980)">0</span><span style="position:static;display:inline-block;width:7.5px;text-align:center;transform:scaleX(0.980)">4</span><span style="position:static;display:inline-block;width:7.5px;text-align:center;transform:scaleX(0.980)">0</span><span style="position:static;display:inline-block;width:7.5px;text-align:center;transform:scaleX(0.980)">8</span></span>
<div style="left:39px;top:423px;width:17px;height:1px;background:repeating-linear-gradient(90deg,#b4b4b4 0 1px,transparent 1px 2px)"></div>
<span style="left:58.5px;top:416.24px;white-space:nowrap;font-family:'Liberation Serif',serif;font-size:15px;line-height:14px;color:#fff;-webkit-text-stroke:0.3px #fff;"><span style="position:static;display:inline-block;width:7.5px;text-align:center;transform:scaleX(0.735)">R</span><span style="position:static;display:inline-block;width:7.5px;text-align:center;transform:scaleX(0.980)">1</span><span style="position:static;display:inline-block;width:7.5px;text-align:center;transform:scaleX(0.980)">4</span><span style="position:static;display:inline-block;width:7.5px">&nbsp;</span><span style="position:static;display:inline-block;width:7.5px;text-align:center">(</span><span style="position:static;display:inline-block;width:7.5px;text-align:center;transform:scaleX(0.802)">L</span><span style="position:static;display:inline-block;width:7.5px;text-align:center;transform:scaleX(0.735)">R</span><span style="position:static;display:inline-block;width:7.5px;text-align:center">)</span></span>
<span style="left:152.5px;top:416.24px;white-space:nowrap;font-family:'Liberation Serif',serif;font-size:15px;line-height:14px;color:#fff;-webkit-text-stroke:0.3px #fff;"><span style="position:static;display:inline-block;width:7.5px;text-align:center;transform:scaleX(0.980)">0</span><span style="position:static;display:inline-block;width:7.5px;text-align:center;transform:scaleX(0.980)">x</span><span style="position:static;display:inline-block;width:7.5px;text-align:center;transform:scaleX(0.980)">0</span><span style="position:static;display:inline-block;width:7.5px;text-align:center;transform:scaleX(0.980)">8</span><span style="position:static;display:inline-block;width:7.5px;text-align:center;transform:scaleX(0.980)">0</span><span style="position:static;display:inline-block;width:7.5px;text-align:center;transform:scaleX(0.980)">0</span><span style="position:static;display:inline-block;width:7.5px;text-align:center;transform:scaleX(0.980)">0</span><span style="position:static;display:inline-block;width:7.5px;text-align:center;transform:scaleX(0.980)">1</span><span style="position:static;display:inline-block;width:7.5px;text-align:center;transform:scaleX(0.679)">D</span><span style="position:static;display:inline-block;width:7.5px;text-align:center;transform:scaleX(0.679)">D</span></span>
<div style="left:39px;top:440px;width:17px;height:1px;background:repeating-linear-gradient(90deg,#b4b4b4 0 1px,transparent 1px 2px)"></div>
<span style="left:58.5px;top:433.72px;white-space:nowrap;font-family:'Liberation Serif',serif;font-size:15px;line-height:14px;color:#fff;-webkit-text-stroke:0.3px #fff;"><span style="position:static;display:inline-block;width:7.5px;text-align:center;transform:scaleX(0.735)">R</span><span style="position:static;display:inline-block;width:7.5px;text-align:center;transform:scaleX(0.980)">1</span><span style="position:static;display:inline-block;width:7.5px;text-align:center;transform:scaleX(0.980)">5</span><span style="position:static;display:inline-block;width:7.5px">&nbsp;</span><span style="position:static;display:inline-block;width:7.5px;text-align:center">(</span><span style="position:static;display:inline-block;width:7.5px;text-align:center;transform:scaleX(0.881)">P</span><span style="position:static;display:inline-block;width:7.5px;text-align:center;transform:scaleX(0.735)">C</span><span style="position:static;display:inline-block;width:7.5px;text-align:center">)</span></span>
<span style="left:152.5px;top:433.72px;white-space:nowrap;font-family:'Liberation Serif',serif;font-size:15px;line-height:14px;color:#fff;-webkit-text-stroke:0.3px #fff;"><span style="position:static;display:inline-block;width:7.5px;text-align:center;transform:scaleX(0.980)">0</span><span style="position:static;display:inline-block;width:7.5px;text-align:center;transform:scaleX(0.980)">x</span><span style="position:static;display:inline-block;width:7.5px;text-align:center;transform:scaleX(0.980)">0</span><span style="position:static;display:inline-block;width:7.5px;text-align:center;transform:scaleX(0.980)">8</span><span style="position:static;display:inline-block;width:7.5px;text-align:center;transform:scaleX(0.980)">0</span><span style="position:static;display:inline-block;width:7.5px;text-align:center;transform:scaleX(0.980)">0</span><span style="position:static;display:inline-block;width:7.5px;text-align:center;transform:scaleX(0.980)">0</span><span style="position:static;display:inline-block;width:7.5px;text-align:center;transform:scaleX(0.980)">3</span><span style="position:static;display:inline-block;width:7.5px;text-align:center;transform:scaleX(0.980)">9</span><span style="position:static;display:inline-block;width:7.5px;text-align:center;transform:scaleX(0.980)">4</span></span>
<div style="left:33px;top:452px;width:11px;height:11px;background:#fff;border:1px solid #c0c0c0"></div>
<div style="left:35px;top:457px;width:7px;height:1px;background:#000"></div>
<div style="left:38px;top:454px;width:1px;height:7px;background:#000"></div>
<div style="left:44px;top:458px;width:12px;height:1px;background:repeating-linear-gradient(90deg,#b4b4b4 0 1px,transparent 1px 2px)"></div>
<span style="left:58.5px;top:451.2px;white-space:nowrap;font-family:'Liberation Serif',serif;font-size:15px;line-height:14px;color:#fff;-webkit-text-stroke:0.3px #fff;"><span style="position:static;display:inline-block;width:7.5px;text-align:center;transform:scaleX(0.980)">x</span><span style="position:static;display:inline-block;width:7.5px;text-align:center;transform:scaleX(0.881)">P</span><span style="position:static;display:inline-block;width:7.5px;text-align:center;transform:scaleX(0.881)">S</span><span style="position:static;display:inline-block;width:7.5px;text-align:center;transform:scaleX(0.735)">R</span></span>
<span style="left:152.5px;top:451.2px;white-space:nowrap;font-family:'Liberation Serif',serif;font-size:15px;line-height:14px;color:#fff;-webkit-text-stroke:0.3px #fff;"><span style="position:static;display:inline-block;width:7.5px;text-align:center;transform:scaleX(0.980)">0</span><span style="position:static;display:inline-block;width:7.5px;text-align:center;transform:scaleX(0.980)">x</span><span style="position:static;display:inline-block;width:7.5px;text-align:center;transform:scaleX(0.980)">6</span><span style="position:static;display:inline-block;width:7.5px;text-align:center;transform:scaleX(0.980)">1</span><span style="position:static;display:inline-block;width:7.5px;text-align:center;transform:scaleX(0.980)">0</span><span style="position:static;display:inline-block;width:7.5px;text-align:center;transform:scaleX(0.980)">0</span><span style="position:static;display:inline-block;width:7.5px;text-align:center;transform:scaleX(0.980)">0</span><span style="position:static;display:inline-block;width:7.5px;text-align:center;transform:scaleX(0.980)">0</span><span style="position:static;display:inline-block;width:7.5px;text-align:center;transform:scaleX(0.980)">0</span><span style="position:static;display:inline-block;width:7.5px;text-align:center;transform:scaleX(0.980)">0</span></span>
<div style="left:7px;top:470px;width:11px;height:11px;background:#fff;border:1px solid #c0c0c0"></div>
<div style="left:9px;top:475px;width:7px;height:1px;background:#000"></div>
<div style="left:12px;top:472px;width:1px;height:7px;background:#000"></div>
<div style="left:19px;top:475px;width:13px;height:1px;background:repeating-linear-gradient(90deg,#b4b4b4 0 1px,transparent 1px 2px)"></div>
<span style="left:33.5px;top:468.68px;white-space:nowrap;font-family:'Liberation Serif',serif;font-size:15px;line-height:14px;color:#000;-webkit-text-stroke:0.3px #000;"><span style="position:static;display:inline-block;width:7.5px;text-align:center;transform:scaleX(0.735)">B</span><span style="position:static;display:inline-block;width:7.5px;text-align:center">a</span><span style="position:static;display:inline-block;width:7.5px;text-align:center;transform:scaleX(0.980)">n</span><span style="position:static;display:inline-block;width:7.5px;text-align:center;transform:scaleX(0.980)">k</span><span style="position:static;display:inline-block;width:7.5px;text-align:center">e</span><span style="position:static;display:inline-block;width:7.5px;text-align:center;transform:scaleX(0.980)">d</span></span>
<div style="left:7px;top:487px;width:11px;height:11px;background:#fff;border:1px solid #c0c0c0"></div>
<div style="left:9px;top:492px;width:7px;height:1px;background:#000"></div>
<div style="left:12px;top:489px;width:1px;height:7px;background:#000"></div>
<div style="left:19px;top:493px;width:13px;height:1px;background:repeating-linear-gradient(90deg,#b4b4b4 0 1px,transparent 1px 2px)"></div>
<span style="left:33.5px;top:486.16px;white-space:nowrap;font-family:'Liberation Serif',serif;font-size:15px;line-height:14px;color:#000;-webkit-text-stroke:0.3px #000;"><span style="position:static;display:inline-block;width:7.5px;text-align:center;transform:scaleX(0.881)">S</span><span style="position:static;display:inline-block;width:7.5px;text-align:center;transform:scaleX(0.980)">y</span><span style="position:static;display:inline-block;width:7.5px;text-align:center">s</span><span style="position:static;display:inline-block;width:7.5px;text-align:center">t</span><span style="position:static;display:inline-block;width:7.5px;text-align:center">e</span><span style="position:static;display:inline-block;width:7.5px;text-align:center;transform:scaleX(0.630)">m</span></span>
<div style="left:7px;top:505px;width:11px;height:11px;background:#fff;border:1px solid #c0c0c0"></div>
<div style="left:9px;top:510px;width:7px;height:1px;background:#000"></div>
<div style="left:19px;top:510px;width:13px;height:1px;background:repeating-linear-gradient(90deg,#b4b4b4 0 1px,transparent 1px 2px)"></div>
<span style="left:33.5px;top:503.64px;white-space:nowrap;font-family:'Liberation Serif',serif;font-size:15px;line-height:14px;color:#000;-webkit-text-stroke:0.3px #000;"><span style="position:static;display:inline-block;width:7.5px;text-align:center">I</span><span style="position:static;display:inline-block;width:7.5px;text-align:center;transform:scaleX(0.980)">n</span><span style="position:static;display:inline-block;width:7.5px;text-align:center">t</span><span style="position:static;display:inline-block;width:7.5px;text-align:center">e</span><span style="position:static;display:inline-block;width:7.5px;text-align:center">r</span><span style="position:static;display:inline-block;width:7.5px;text-align:center;transform:scaleX(0.980)">n</span><span style="position:static;display:inline-block;width:7.5px;text-align:center">a</span><span style="position:static;display:inline-block;width:7.5px;text-align:center">l</span></span>
<div style="left:39px;top:528px;width:17px;height:1px;background:repeating-linear-gradient(90deg,#b4b4b4 0 1px,transparent 1px 2px)"></div>
<span style="left:58.5px;top:521.12px;white-space:nowrap;font-family:'Liberation Serif',serif;font-size:15px;line-height:14px;color:#000;-webkit-text-stroke:0.3px #000;"><span style="position:static;display:inline-block;width:7.5px;text-align:center;transform:scaleX(0.551)">M</span><span style="position:static;display:inline-block;width:7.5px;text-align:center;transform:scaleX(0.980)">o</span><span style="position:static;display:inline-block;width:7.5px;text-align:center;transform:scaleX(0.980)">d</span><span style="position:static;display:inline-block;width:7.5px;text-align:center">e</span></span>
<span style="left:152.5px;top:521.12px;white-space:nowrap;font-family:'Liberation Serif',serif;font-size:15px;line-height:14px;color:#000;-webkit-text-stroke:0.3px #000;"><span style="position:static;display:inline-block;width:7.5px;text-align:center;transform:scaleX(0.802)">T</span><span style="position:static;display:inline-block;width:7.5px;text-align:center;transform:scaleX(0.980)">h</span><span style="position:static;display:inline-block;width:7.5px;text-align:center">r</span><span style="position:static;display:inline-block;width:7.5px;text-align:center">e</span><span style="position:static;display:inline-block;width:7.5px;text-align:center">a</span><span style="position:static;display:inline-block;width:7.5px;text-align:center;transform:scaleX(0.980)">d</span></span>
<div style="left:39px;top:545px;width:17px;height:1px;background:repeating-linear-gradient(90deg,#b4b4b4 0 1px,transparent 1px 2px)"></div>
<span style="left:58.5px;top:538.6px;white-space:nowrap;font-family:'Liberation Serif',serif;font-size:15px;line-height:14px;color:#000;-webkit-text-stroke:0.3px #000;"><span style="position:static;display:inline-block;width:7.5px;text-align:center;transform:scaleX(0.881)">P</span><span style="position:static;display:inline-block;width:7.5px;text-align:center">r</span><span style="position:static;display:inline-block;width:7.5px;text-align:center">i</span><span style="position:static;display:inline-block;width:7.5px;text-align:center;transform:scaleX(0.980)">v</span><span style="position:static;display:inline-block;width:7.5px;text-align:center">i</span><span style="position:static;display:inline-block;width:7.5px;text-align:center">l</span><span style="position:static;display:inline-block;width:7.5px;text-align:center">e</span><span style="position:static;display:inline-block;width:7.5px;text-align:center;transform:scaleX(0.980)">g</span><span style="position:static;display:inline-block;width:7.5px;text-align:center">e</span></span>
<span style="left:152.5px;top:538.6px;white-space:nowrap;font-family:'Liberation Serif',serif;font-size:15px;line-height:14px;color:#000;-webkit-text-stroke:0.3px #000;"><span style="position:static;display:inline-block;width:7.5px;text-align:center;transform:scaleX(0.881)">P</span><span style="position:static;display:inline-block;width:7.5px;text-align:center">r</span><span style="position:static;display:inline-block;width:7.5px;text-align:center">i</span><span style="position:static;display:inline-block;width:7.5px;text-align:center;transform:scaleX(0.980)">v</span><span style="position:static;display:inline-block;width:7.5px;text-align:center">i</span><span style="position:static;display:inline-block;width:7.5px;text-align:center">l</span><span style="position:static;display:inline-block;width:7.5px;text-align:center">e</span><span style="position:static;display:inline-block;width:7.5px;text-align:center;transform:scaleX(0.980)">g</span><span style="position:static;display:inline-block;width:7.5px;text-align:center">e</span><span style="position:static;display:inline-block;width:7.5px;text-align:center;transform:scaleX(0.980)">d</span></span>
<div style="left:39px;top:563px;width:17px;height:1px;background:repeating-linear-gradient(90deg,#b4b4b4 0 1px,transparent 1px 2px)"></div>
<span style="left:58.5px;top:556.08px;white-space:nowrap;font-family:'Liberation Serif',serif;font-size:15px;line-height:14px;color:#000;-webkit-text-stroke:0.3px #000;"><span style="position:static;display:inline-block;width:7.5px;text-align:center;transform:scaleX(0.881)">S</span><span style="position:static;display:inline-block;width:7.5px;text-align:center">t</span><span style="position:static;display:inline-block;width:7.5px;text-align:center">a</span><span style="position:static;display:inline-block;width:7.5px;text-align:center">c</span><span style="position:static;display:inline-block;width:7.5px;text-align:center;transform:scaleX(0.980)">k</span></span>
<span style="left:152.5px;top:556.08px;white-space:nowrap;font-family:'Liberation Serif',serif;font-size:15px;line-height:14px;color:#000;-webkit-text-stroke:0.3px #000;"><span style="position:static;display:inline-block;width:7.5px;text-align:center;transform:scaleX(0.551)">M</span><span style="position:static;display:inline-block;width:7.5px;text-align:center;transform:scaleX(0.881)">S</span><span style="position:static;display:inline-block;width:7.5px;text-align:center;transform:scaleX(0.881)">P</span></span>
<div style="left:39px;top:580px;width:17px;height:1px;background:repeating-linear-gradient(90deg,#b4b4b4 0 1px,transparent 1px 2px)"></div>
<span style="left:58.5px;top:573.56px;white-space:nowrap;font-family:'Liberation Serif',serif;font-size:15px;line-height:14px;color:#000;-webkit-text-stroke:0.3px #000;"><span style="position:static;display:inline-block;width:7.5px;text-align:center;transform:scaleX(0.881)">S</span><span style="position:static;display:inline-block;width:7.5px;text-align:center">t</span><span style="position:static;display:inline-block;width:7.5px;text-align:center">a</span><span style="position:static;display:inline-block;width:7.5px;text-align:center">t</span><span style="position:static;display:inline-block;width:7.5px;text-align:center">e</span><span style="position:static;display:inline-block;width:7.5px;text-align:center">s</span></span>
<span style="left:152.5px;top:573.56px;white-space:nowrap;font-family:'Liberation Serif',serif;font-size:15px;line-height:14px;color:#000;-webkit-text-stroke:0.3px #000;"><span style="position:static;display:inline-block;width:7.5px;text-align:center;transform:scaleX(0.980)">5</span><span style="position:static;display:inline-block;width:7.5px;text-align:center;transform:scaleX(0.980)">0</span><span style="position:static;display:inline-block;width:7.5px;text-align:center;transform:scaleX(0.980)">9</span><span style="position:static;display:inline-block;width:7.5px;text-align:center;transform:scaleX(0.980)">4</span><span style="position:static;display:inline-block;width:7.5px;text-align:center;transform:scaleX(0.980)">2</span><span style="position:static;display:inline-block;width:7.5px;text-align:center;transform:scaleX(0.980)">9</span></span>
<div style="left:39px;top:598px;width:17px;height:1px;background:repeating-linear-gradient(90deg,#b4b4b4 0 1px,transparent 1px 2px)"></div>
<span style="left:58.5px;top:591.04px;white-space:nowrap;font-family:'Liberation Serif',serif;font-size:15px;line-height:14px;color:#000;-webkit-text-stroke:0.3px #000;"><span style="position:static;display:inline-block;width:7.5px;text-align:center;transform:scaleX(0.881)">S</span><span style="position:static;display:inline-block;width:7.5px;text-align:center">e</span><span style="position:static;display:inline-block;width:7.5px;text-align:center">c</span></span>
<span style="left:152.5px;top:591.04px;white-space:nowrap;font-family:'Liberation Serif',serif;font-size:15px;line-height:14px;color:#000;-webkit-text-stroke:0.3px #000;"><span style="position:static;display:inline-block;width:7.5px;text-align:center;transform:scaleX(0.980)">0</span><span style="position:static;display:inline-block;width:7.5px;text-align:center">.</span><span style="position:static;display:inline-block;width:7.5px;text-align:center;transform:scaleX(0.980)">0</span><span style="position:static;display:inline-block;width:7.5px;text-align:center;transform:scaleX(0.980)">5</span><span style="position:static;display:inline-block;width:7.5px;text-align:center;transform:scaleX(0.980)">0</span><span style="position:static;display:inline-block;width:7.5px;text-align:center;transform:scaleX(0.980)">9</span><span style="position:static;display:inline-block;width:7.5px;text-align:center;transform:scaleX(0.980)">4</span><span style="position:static;display:inline-block;width:7.5px;text-align:center;transform:scaleX(0.980)">2</span><span style="position:static;display:inline-block;width:7.5px;text-align:center;transform:scaleX(0.980)">9</span><span style="position:static;display:inline-block;width:7.5px;text-align:center;transform:scaleX(0.980)">0</span></span>
<div style="left:7px;top:610px;width:11px;height:11px;background:#fff;border:1px solid #c0c0c0"></div>
<div style="left:9px;top:615px;width:7px;height:1px;background:#000"></div>
<div style="left:12px;top:612px;width:1px;height:7px;background:#000"></div>
<div style="left:19px;top:615px;width:13px;height:1px;background:repeating-linear-gradient(90deg,#b4b4b4 0 1px,transparent 1px 2px)"></div>
<span style="left:33.5px;top:608.52px;white-space:nowrap;font-family:'Liberation Serif',serif;font-size:15px;line-height:14px;color:#000;-webkit-text-stroke:0.3px #000;"><span style="position:static;display:inline-block;width:7.5px;text-align:center;transform:scaleX(0.881)">F</span><span style="position:static;display:inline-block;width:7.5px;text-align:center;transform:scaleX(0.881)">P</span><span style="position:static;display:inline-block;width:7.5px;text-align:center;transform:scaleX(0.679)">U</span></span>
<div style="left:0px;top:658px;width:235px;height:32px;background:#f5f5f5"></div>
<div style="left:0px;top:661px;width:80px;height:1px;background:#2b2b2b"></div>
<div style="left:174px;top:661px;width:61px;height:1px;background:#2b2b2b"></div>
<div style="left:80px;top:661px;width:95px;height:28px;background:#f0f0f0;border-right:1px solid #2b2b2b;border-bottom:2px solid #2b2b2b"></div>
<div style="left:79px;top:665px;width:1px;height:20px;background:#c8c8c8"></div>
<span class="t" style="left:26.00px;top:668.45px;font-size:14px;line-height:14px;letter-spacing:-0.104px;color:#8c8c8c;">Project</span>
<span class="t" style="left:108.00px;top:668.45px;font-size:14px;line-height:14px;letter-spacing:-0.266px;color:#1e1e1e;">Registers</span>
<div style="left:242px;top:121px;width:1274px;height:2px;background:#696969"></div>
<div style="left:242px;top:121px;width:2px;height:110px;background:#696969"></div>
<div style="left:244px;top:123px;width:1272px;height:87px;background:#fff"></div>
<div style="left:244px;top:123px;width:18px;height:87px;background:repeating-conic-gradient(#d4d4d4 0 25%,#f4f4f4 0 50%) 0 0/2px 2px"></div>
<span class="m" style="left:263px;top:125px;font-size:15px;line-height:20px;letter-spacing:1px;white-space:pre;color:#800000">    26:     systick_config();</span>
<span class="m" style="left:263px;top:145px;font-size:15px;line-height:20px;letter-spacing:1px;white-space:pre;color:#800000">    27: </span>
<span class="m" style="left:263px;top:165px;font-size:15px;line-height:20px;letter-spacing:1px;white-space:pre;color:#800000">    28:     /* enable the LEDs GPIO clock */</span>
<div style="left:262px;top:183px;width:1254px;height:20px;background:#ffff00"></div>
<div style="left:244px;top:183px;width:18px;height:20px;background:#c0c0c0"></div>
<svg style="left:244px;top:185px" width="19" height="18"><path d="M1.5 6.3H10.2V1.5L17.5 9L10.2 16.5V11.7H1.5Z" fill="#ffff00" stroke="#000" stroke-width="1.1"/></svg>
<span class="m" style="left:263px;top:185px;font-size:15px;line-height:20px;letter-spacing:1px;white-space:pre;color:#000">0x08000394 F000F8BC  BL.W          systick_config (0x08000510)</span>
<div style="left:244px;top:203px;width:1272px;height:6px;overflow:hidden"><span class="m" style="left:19px;top:2px;font-size:15px;line-height:20px;letter-spacing:1px;white-space:pre;color:#800000">    29:     rcu_periph_clock_enable(RCU_GPIOC);</span></div>
<div style="left:244px;top:210px;width:1272px;height:21px;background:#f0f0f0"></div>
<div style="left:265px;top:211px;width:21px;height:19px;background:#c8c8c8"></div>
<svg style="left:249px;top:215px" width="8" height="11"><path d="M6.5 1L2 5.5L6.5 10" fill="none" stroke="#606060" stroke-width="1.8"/></svg>
<div style="left:241px;top:238px;width:1275px;height:2px;background:#d0d0d0"></div>
<div style="left:241px;top:238px;width:2px;height:30px;background:#d0d0d0"></div>
<div style="left:243px;top:240px;width:1273px;height:28px;background:#f5f5f5"></div>
<svg style="left:240px;top:236px" width="300" height="34"><path d="M7 32 L33 6 H197 Q199.5 6 199.5 8.5 V32Z" fill="#c6d5f1" stroke="#d0d0d0" stroke-width="1"/><path d="M181 32 L207.5 6.5 H292 Q294.5 6.5 294.5 9 V32Z" fill="#fdd981" stroke="#d0d0d0" stroke-width="1"/></svg>
<span class="t" style="left:305.30px;top:247.45px;font-size:14px;line-height:14px;letter-spacing:0.084px;color:#1e1e1e;">startup_gd32f407.s</span>
<span class="t" style="left:480.70px;top:246.85px;font-size:14px;line-height:14px;letter-spacing:-0.535px;color:#000;font-weight:bold;">main.c</span>
<div style="left:475px;top:264.5px;width:52px;height:2px;background:#000"></div>
<div style="left:242px;top:267px;width:1274px;height:3px;background:#fcd87e"></div>
<div style="left:242px;top:267px;width:3px;height:423px;background:#fcd87e"></div>
<div style="left:242px;top:686px;width:1274px;height:3px;background:#fcd87e"></div>
<div style="left:245px;top:270px;width:1271px;height:2px;background:#646464"></div>
<div style="left:245px;top:270px;width:2px;height:414px;background:#646464"></div>
<div style="left:247px;top:272px;width:85px;height:391px;background:#e8e8e8"></div>
<div style="left:332px;top:272px;width:18px;height:391px;background:repeating-conic-gradient(#e4e4e4 0 25%,#f8f8f8 0 50%) 0 0/2px 2px"></div>
<div style="left:350px;top:272px;width:1166px;height:391px;background:#fff"></div>
<div style="left:351px;top:391px;width:1165px;height:24px;background:#ddfadf"></div>
<div style="left:247px;top:463px;width:25px;height:22px;background:#c0c0c0"></div>
<div style="left:247px;top:534px;width:25px;height:46px;background:#c0c0c0"></div>
<div style="left:247px;top:558px;width:25px;height:22px;background:#c0c0c0"></div>
<div style="left:247px;top:606px;width:25px;height:22px;background:#c0c0c0"></div>
<div style="left:247px;top:653px;width:25px;height:22px;background:#c0c0c0"></div>
<div style="left:247px;top:272px;width:1269px;height:391px;overflow:hidden">
<span class="m" style="left:58.5px;top:1.5px;font-size:18.75px;line-height:23px;white-space:pre;color:#000">21</span>
<span class="m" style="left:104px;top:1.5px;font-size:18.75px;line-height:23px;white-space:pre"><span style="position:static;color:#2e9a2e">  * </span><span style="position:static;color:#a0522d">@retval</span><span style="position:static;color:#2e9a2e"> None</span></span>
<span class="m" style="left:58.5px;top:25.25px;font-size:18.75px;line-height:23px;white-space:pre;color:#000">22</span>
<span class="m" style="left:104px;top:25.25px;font-size:18.75px;line-height:23px;white-space:pre"><span style="position:static;color:#2e9a2e">  */</span></span>
<span class="m" style="left:58.5px;top:49.0px;font-size:18.75px;line-height:23px;white-space:pre;color:#000">23</span>
<span class="m" style="left:104px;top:49.0px;font-size:18.75px;line-height:23px;white-space:pre"><span style="position:static;color:#0000ff">int</span><span style="position:static;color:#000"> main(</span><span style="position:static;color:#0000ff">void</span><span style="position:static;color:#000">)</span></span>
<span class="m" style="left:58.5px;top:72.75px;font-size:18.75px;line-height:23px;white-space:pre;color:#000">24</span>
<span class="m" style="left:104px;top:72.75px;font-size:18.75px;line-height:23px;white-space:pre"><span style="position:static;color:#000">{</span></span>
<span class="m" style="left:58.5px;top:96.5px;font-size:18.75px;line-height:23px;white-space:pre;color:#000">25</span>
<span class="m" style="left:104px;top:96.5px;font-size:18.75px;line-height:23px;white-space:pre"><span style="position:static;color:#2e9a2e">    /* configure systick */</span></span>
<span class="m" style="left:58.5px;top:120.25px;font-size:18.75px;line-height:23px;white-space:pre;color:#000">26</span>
<span class="m" style="left:104px;top:120.25px;font-size:18.75px;line-height:23px;white-space:pre"><span style="position:static;color:#000">    systick_config();</span></span>
<span class="m" style="left:58.5px;top:144.0px;font-size:18.75px;line-height:23px;white-space:pre;color:#000">27</span>
<span class="m" style="left:104px;top:144.0px;font-size:18.75px;line-height:23px;white-space:pre"></span>
<span class="m" style="left:58.5px;top:167.75px;font-size:18.75px;line-height:23px;white-space:pre;color:#000">28</span>
<span class="m" style="left:104px;top:167.75px;font-size:18.75px;line-height:23px;white-space:pre"><span style="position:static;color:#2e9a2e">    /* enable the LEDs GPIO clock */</span></span>
<span class="m" style="left:58.5px;top:191.5px;font-size:18.75px;line-height:23px;white-space:pre;color:#000">29</span>
<span class="m" style="left:104px;top:191.5px;font-size:18.75px;line-height:23px;white-space:pre"><span style="position:static;color:#000">    rcu_periph_clock_enable(RCU_GPIOC);</span></span>
<span class="m" style="left:58.5px;top:215.25px;font-size:18.75px;line-height:23px;white-space:pre;color:#000">30</span>
<span class="m" style="left:104px;top:215.25px;font-size:18.75px;line-height:23px;white-space:pre"></span>
<span class="m" style="left:58.5px;top:239.0px;font-size:18.75px;line-height:23px;white-space:pre;color:#000">31</span>
<span class="m" style="left:104px;top:239.0px;font-size:18.75px;line-height:23px;white-space:pre"><span style="position:static;color:#2e9a2e">    /* configure LED2 GPIO port */</span></span>
<span class="m" style="left:58.5px;top:262.75px;font-size:18.75px;line-height:23px;white-space:pre;color:#000">32</span>
<span class="m" style="left:104px;top:262.75px;font-size:18.75px;line-height:23px;white-space:pre"><span style="position:static;color:#000">    gpio_mode_set(GPIOC, GPIO_MODE_OUTPUT, GPIO_PUPD_NONE, GPIO_PIN_6);</span></span>
<span class="m" style="left:58.5px;top:286.5px;font-size:18.75px;line-height:23px;white-space:pre;color:#000">33</span>
<span class="m" style="left:104px;top:286.5px;font-size:18.75px;line-height:23px;white-space:pre"><span style="position:static;color:#000">    gpio_output_options_set(GPIOC, GPIO_OTYPE_PP, GPIO_OSPEED_50MHZ, GPIO_PIN_6);</span></span>
<span class="m" style="left:58.5px;top:310.25px;font-size:18.75px;line-height:23px;white-space:pre;color:#000">34</span>
<span class="m" style="left:104px;top:310.25px;font-size:18.75px;line-height:23px;white-space:pre"><span style="position:static;color:#2e9a2e">    /* reset LED2 GPIO pin */</span></span>
<span class="m" style="left:58.5px;top:334.0px;font-size:18.75px;line-height:23px;white-space:pre;color:#000">35</span>
<span class="m" style="left:104px;top:334.0px;font-size:18.75px;line-height:23px;white-space:pre"><span style="position:static;color:#000">    gpio_bit_reset(GPIOC, GPIO_PIN_6);</span></span>
<span class="m" style="left:58.5px;top:357.75px;font-size:18.75px;line-height:23px;white-space:pre;color:#000">36</span>
<span class="m" style="left:104px;top:357.75px;font-size:18.75px;line-height:23px;white-space:pre"></span>
<span class="m" style="left:58.5px;top:381.5px;font-size:18.75px;line-height:23px;white-space:pre;color:#000">37</span>
<span class="m" style="left:104px;top:381.5px;font-size:18.75px;line-height:23px;white-space:pre"><span style="position:static;color:#000">    </span><span style="position:static;color:#0000ff">while</span><span style="position:static;color:#000">(</span><span style="position:static;color:#009090">1</span><span style="position:static;color:#000">)</span></span>
</div>
<div style="left:341px;top:272px;width:1px;height:36px;background:#808080"></div>
<div style="left:341px;top:307px;width:7px;height:1px;background:#808080"></div>
<svg style="left:334px;top:348px" width="15" height="14"><rect x="0.75" y="0.75" width="13.5" height="12.5" fill="#f4f4f4" stroke="#8c8c8c" stroke-width="1.5"/><path d="M3 6.9H11.8" stroke="#6a6a6a" stroke-width="1.6"/></svg>
<div style="left:341px;top:362px;width:1px;height:301px;background:#808080"></div>
<svg style="left:247px;top:390px" width="25" height="22"><rect x="0" y="0" width="25" height="22" fill="#c0c0c0"/><path d="M3 3 L12 11 L3 19Z" fill="#40e0ff" stroke="#000" stroke-width="1"/><path d="M12 3 L21 11 L12 19Z" fill="#ffff00" stroke="#000" stroke-width="1"/></svg>
<div style="left:247px;top:663px;width:1269px;height:21px;background:#f0f0f0"></div>
<div style="left:247px;top:683px;width:1269px;height:3px;background:#f5f5f5"></div>
<div style="left:268px;top:664px;width:983px;height:19px;background:#c2c2c2"></div>
<svg style="left:252px;top:668px" width="8" height="11"><path d="M6.5 1L2 5.5L6.5 10" fill="none" stroke="#606060" stroke-width="1.8"/></svg>
<div style="left:0px;top:720px;width:955px;height:2px;background:#696969"></div>
<div style="left:0px;top:722px;width:933px;height:174px;background:#fff"></div>
<div style="left:933px;top:722px;width:22px;height:174px;background:#f0f0f0"></div>
<div style="left:0px;top:896px;width:955px;height:20px;background:#f0f0f0"></div>
<span class="m" style="left:1px;top:724.7px;font-size:15px;line-height:20px;letter-spacing:1px;white-space:pre;color:#000">Load "..\\Output\\GD32F407V.axf"</span>
<svg style="left:937px;top:729px" width="11" height="8"><path d="M1 6.5L5.5 2L10 6.5" fill="none" stroke="#b8b8b8" stroke-width="1.8"/></svg>
<svg style="left:937px;top:880px" width="11" height="8"><path d="M1 1.5L5.5 6L10 1.5" fill="none" stroke="#b8b8b8" stroke-width="1.8"/></svg>
<svg style="left:918px;top:900px" width="8" height="11"><path d="M1.5 1L6 5.5L1.5 10" fill="none" stroke="#b8b8b8" stroke-width="1.8"/></svg>
<svg style="left:2px;top:900px" width="8" height="11"><path d="M6.5 1L2 5.5L6.5 10" fill="none" stroke="#b8b8b8" stroke-width="1.8"/></svg>
<div style="left:0px;top:916px;width:955px;height:6px;background:#fafafa"></div>
<div style="left:0px;top:921px;width:955px;height:2px;background:#6e6e6e"></div>
<div style="left:0px;top:923px;width:955px;height:23px;background:#fff"></div>
<div style="left:0px;top:923px;width:16px;height:23px;background:#f0f0f0"></div>
<span class="m" style="left:7px;top:925.5px;font-size:15px;line-height:20px;letter-spacing:1px;white-space:pre;color:#555">&gt;</span>
<div style="left:0px;top:946px;width:955px;height:1px;background:#fafafa"></div>
<div style="left:0px;top:947px;width:954px;height:26px;background:#efefef"></div>
<div style="left:954px;top:946px;width:2px;height:28px;background:#8a8a8a"></div>
<span class="m" style="left:0px;top:951.5px;font-size:15px;line-height:20px;letter-spacing:1px;white-space:pre;color:#000;-webkit-text-stroke:0.2px #000">ASSIGN BreakDisable BreakEnable BreakKill BreakList BreakSet BreakAccess COVERAGE COVTOFILE</span>
<div style="left:0px;top:973px;width:1516px;height:3px;background:#e8e8e8"></div>
<div style="left:961px;top:721px;width:555px;height:1px;background:#a0a0a0"></div>
<div style="left:961px;top:721px;width:1px;height:223px;background:#a0a0a0"></div>
<div style="left:962px;top:722px;width:554px;height:222px;background:#fff"></div>
<div style="left:965px;top:753px;width:551px;height:1px;background:#a0a0a0"></div>
<div style="left:1213px;top:722px;width:1px;height:56px;background:#d8d8d8"></div>
<div style="left:1380px;top:722px;width:1px;height:56px;background:#d8d8d8"></div>
<span class="t" style="left:971.50px;top:731.93px;font-size:14.5px;line-height:14.5px;letter-spacing:0.225px;color:#1e1e1e;">Name</span>
<span class="t" style="left:1221.60px;top:731.93px;font-size:14.5px;line-height:14.5px;letter-spacing:0.248px;color:#1e1e1e;">Location/Value</span>
<span class="t" style="left:1387.60px;top:731.93px;font-size:14.5px;line-height:14.5px;letter-spacing:-0.392px;color:#1e1e1e;">Type</span>
<div style="left:1015px;top:755px;width:501px;height:23px;background:#efefef"></div>
<div style="left:1213px;top:777px;width:303px;height:1px;background:#a0a0a0"></div>
<div style="left:1213px;top:754px;width:1px;height:24px;background:#a0a0a0"></div>
<div style="left:1380px;top:754px;width:1px;height:24px;background:#a0a0a0"></div>
<div style="left:977px;top:766px;width:17px;height:1px;background:repeating-linear-gradient(90deg,#b4b4b4 0 1px,transparent 1px 2px)"></div>
<svg style="left:997px;top:755px" width="14" height="16"><path d="M6.5 0.8L12 6L6.5 14.5L1 6Z" fill="#b848c8"/><path d="M6.5 0.8L12 6L6.5 8.5L1 6Z" fill="#f0a8f8"/><path d="M6.5 8.5L12 6L6.5 14.5Z" fill="#8a2a9a"/></svg>
<span class="t" style="left:1019.00px;top:758.43px;font-size:14.5px;line-height:14.5px;letter-spacing:0.342px;color:#000;">main</span>
<span class="t" style="left:1219.00px;top:758.43px;font-size:14.5px;line-height:14.5px;letter-spacing:-0.653px;color:#000;">0x00000000</span>
<span class="t" style="left:1385.00px;top:758.43px;font-size:14.5px;line-height:14.5px;letter-spacing:0.333px;color:#000;">int f()</span>
<div style="left:962px;top:944px;width:554px;height:29px;background:#f6f6f6"></div>
<div style="left:962px;top:944px;width:156px;height:28px;background:#f0f0f0"></div>
<div style="left:962px;top:971px;width:156px;height:2px;background:#000"></div>
<div style="left:1117px;top:944px;width:399px;height:1px;background:#000"></div>
<div style="left:1117px;top:944px;width:1px;height:28px;background:#2b2b2b"></div>
<span class="t" style="left:991.80px;top:952.35px;font-size:14px;line-height:14px;letter-spacing:-0.194px;color:#1e1e1e;">Call Stack + Locals</span>
<span class="t" style="left:1146.00px;top:952.35px;font-size:14px;line-height:14px;letter-spacing:-0.215px;color:#8c8c8c;">Trace Exceptions</span>
<span class="t" style="left:1290.20px;top:952.35px;font-size:14px;line-height:14px;letter-spacing:-0.038px;color:#8c8c8c;">Event Counters</span>
<span class="t" style="left:1425.20px;top:952.35px;font-size:14px;line-height:14px;letter-spacing:-0.150px;color:#8c8c8c;">Memory 1</span>
<div style="left:1262px;top:949px;width:1px;height:20px;background:#c8c8c8"></div>
<div style="left:1397px;top:949px;width:1px;height:20px;background:#c8c8c8"></div>
<div style="left:1498px;top:949px;width:1px;height:20px;background:#c8c8c8"></div>
<svg style="left:277px;top:244px" width="16" height="19" viewBox="0 0 16 19"><path d="M1.5 1.5H10L14.5 6V17.5H1.5Z" fill="#fbfbfb" stroke="#4a6a9a" stroke-width="1"/><path d="M10 1.5V6H14.5" fill="#e8eef8" stroke="#4a6a9a" stroke-width="0.9"/><path d="M3 3L8 9.5L3 16Z" fill="#d8d8d8"/></svg>
<svg style="left:453px;top:244px" width="16" height="19" viewBox="0 0 16 19"><path d="M1.5 1.5H10L14.5 6V17.5H1.5Z" fill="#fbfbfb" stroke="#4a6a9a" stroke-width="1"/><path d="M10 1.5V6H14.5" fill="#e8eef8" stroke="#4a6a9a" stroke-width="0.9"/><path d="M3 3L8 9.5L3 16Z" fill="#d8d8d8"/></svg>
<svg style="left:4px;top:665.5px" width="19" height="17" viewBox="0 0 19 17"><rect x="1" y="1" width="17" height="15" fill="#f0f2f8" stroke="#58709c"/><rect x="1" y="1" width="17" height="3" fill="#3c6ad8"/><path d="M4 7H5.5M4 10H5.5M4 13H5.5" stroke="#b8d800" stroke-width="2"/><path d="M7 8H15M7 10.5H15M7 13H15" stroke="#c8e000" stroke-width="1.5"/></svg>
<svg style="left:86px;top:666px" width="19" height="17" viewBox="0 0 19 17"><rect x="1" y="1.5" width="16" height="3.6" rx="1" fill="#5a6a88"/><rect x="1" y="6.5" width="16" height="3.6" rx="1" fill="#5a6a88"/><rect x="1" y="11.5" width="16" height="3.6" rx="1" fill="#5a6a88"/><path d="M3 3.3H15M3 8.3H15M3 13.3H15" stroke="#a8b4c8" stroke-width=".8" stroke-dasharray="1.5 1.5"/></svg>
<svg style="left:967px;top:948px" width="23" height="21" viewBox="0 0 23 21"><rect x="5" y="1" width="8" height="8" fill="#f4f6fa" stroke="#7a8aa8"/><rect x="8" y="4" width="8" height="8" fill="#f4f6fa" stroke="#7a8aa8"/><rect x="11" y="8" width="10" height="10" fill="#f4f6fa" stroke="#7a8aa8"/><path d="M3 10 Q0.5 15 5 18" fill="none" stroke="#3a80e0" stroke-width="2.2"/><path d="M2 15L7 20L8 14Z" fill="#3a80e0"/></svg>
<svg style="left:1123px;top:947px" width="22" height="22" viewBox="0 0 22 22"><rect x="4" y="1" width="16" height="15" fill="#f4f6fa" stroke="#5a6a88"/><rect x="4" y="1" width="16" height="3" fill="#4a80e0"/><path d="M7 7H9M11 7H14M16 7H17M7 10H17" stroke="#505050" stroke-dasharray="1.5 1"/><path d="M8 15L11 11L14 13L17 9" fill="none" stroke="#505050"/><circle cx="4" cy="17.5" r="3" fill="#2a60c0" stroke="#102040"/><circle cx="10" cy="17.5" r="3" fill="#2a60c0" stroke="#102040"/></svg>
<svg style="left:1267px;top:947px" width="22" height="22" viewBox="0 0 22 22"><rect x="4" y="1" width="16" height="15" fill="#f4f6fa" stroke="#5a6a88"/><rect x="4" y="1" width="16" height="3" fill="#4a80e0"/><path d="M7 7H9M11 7H14M16 7H17M7 10H17" stroke="#505050" stroke-dasharray="1.5 1"/><path d="M8 15L11 11L14 13L17 9" fill="none" stroke="#505050"/><circle cx="4" cy="17.5" r="3" fill="#2a60c0" stroke="#102040"/><circle cx="10" cy="17.5" r="3" fill="#2a60c0" stroke="#102040"/></svg>
<svg style="left:1402px;top:948px" width="20" height="19" viewBox="0 0 20 19"><rect x="1" y="1" width="17" height="16" fill="#f4f6fa" stroke="#5a6a88"/><rect x="1" y="1" width="17" height="3" fill="#4a80e0"/><path d="M4 7.5H16M4 10.5H16M4 13.5H16" stroke="#708090" stroke-dasharray="1.2 1.8" stroke-width="1.2"/></svg>
</body></html>
